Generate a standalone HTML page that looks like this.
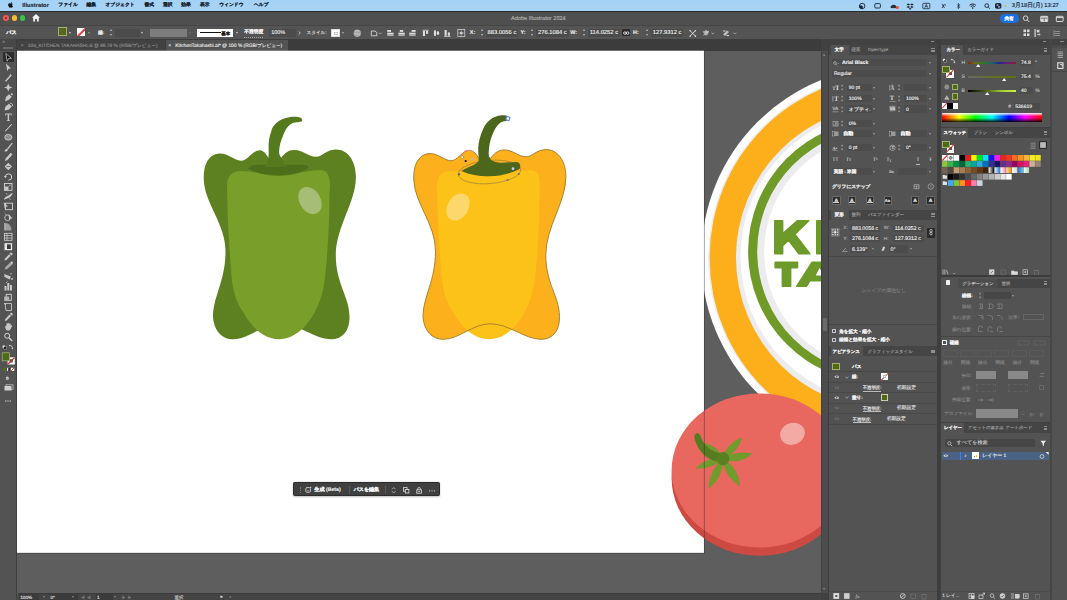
<!DOCTYPE html>
<html lang="ja">
<head>
<meta charset="utf-8">
<title>Adobe Illustrator 2024</title>
<style>
*{box-sizing:border-box;margin:0;padding:0}
html,body{width:1067px;height:600px;overflow:hidden;background:#535353;font-family:"Liberation Sans",sans-serif;}
body{position:relative;color:#ddd;font-size:5px;line-height:1;text-rendering:geometricPrecision}
.a{position:absolute}
.t{position:absolute;white-space:nowrap;line-height:1;font-size:4.8px;color:#d6d6d6;margin-top:.9px;-webkit-text-stroke:.12px}
.j{font-size:4.6px}
.dim{color:#8a8a8a}
.b{font-weight:bold}
/* mac menu bar */
#menubar{left:0;top:0;width:1067px;height:10.5px;background:linear-gradient(#a3d2f7,#a8d3f4)}
#menubar .t{top:3.5px;font-size:4.75px;color:#1a2330;font-weight:bold}
#menubar .l{font-size:5.8px;top:3px}
/* app bars */
#titlebar{left:0;top:10.5px;width:1067px;height:14px;background:#4f4f4f;border-top:1px solid #2a2a2a}
#ctrlbar{left:0;top:24.5px;width:1067px;height:14.5px;background:#545454;border-top:.6px solid #454545}
#tabbar{left:0;top:39px;width:829px;height:11.5px;background:#3c3c3c}
#toolbar{left:0;top:39px;width:16.800px;height:561px;background:#535353;border-right:1px solid #3e3e3e}
#canvas{left:16.800px;top:50.5px;width:805.200px;height:543.5px;background:#5e5e5e;overflow:hidden}
#statusbar{left:17.5px;top:593px;width:811px;height:7px;background:#444}
#dock{left:821px;top:39px;width:246px;height:561px;background:#414141}
.fld{position:absolute;background:#4b4b4b;height:8px;top:3.2px;border-radius:.8px}
.arr{position:absolute;width:0;height:0;border-left:1.6px solid transparent;border-right:1.6px solid transparent;border-top:2px solid #c8c8c8}
.spin{position:absolute;width:3px;height:7px}
.spin:before,.spin:after{content:"";position:absolute;left:0;width:0;height:0;border-left:1.5px solid transparent;border-right:1.5px solid transparent}
.spin:before{top:0;border-bottom:2px solid #bdbdbd}
.spin:after{bottom:0;border-top:2px solid #bdbdbd}
.ic{position:absolute;fill:none;stroke:#d0d0d0;stroke-width:1}
.panel{position:absolute;background:#535353}
.ptabs{position:absolute;left:0;top:0;right:0;height:10.5px;background:#454545}
.ptab{position:absolute;top:0;height:10.5px;background:#535353}
.sw{position:absolute;width:4.55px;height:4.4px}
</style>
</head>
<body>
<!-- MENU BAR -->
<div id="menubar" class="a">
<svg class="a" style="left:8.300px;top:2px" width="5.200" height="6.200" viewBox="0 0 17 20"><path fill="#0d1118" d="M12.2 0c.1 1.1-.3 2.200-1 3-.7.800-1.800 1.400-2.900 1.300-.1-1.100.4-2.200 1-2.900C10 .600 11.200.050 12.200 0zM15.800 6.800c-.2.100-2 1.200-2 3.500 0 2.700 2.400 3.600 2.400 3.600s-1.600 4.800-3.900 4.800c-1 0-1.800-.7-2.900-.7-1.100 0-2.200.7-2.900.7C4.400 18.800.5 13.500.5 9.600c0-3.800 2.400-5.800 4.600-5.800 1.400 0 2.600 1 3.400 1 .8 0 2.200-1.100 3.800-1.100.6 0 2.400.2 3.500 3.100z"/></svg>
<span class="t l" style="left:22.2px">Illustrator</span>
<span class="t" style="left:58.3px">ファイル</span>
<span class="t" style="left:86.6px">編集</span>
<span class="t" style="left:105.5px">オブジェクト</span>
<span class="t" style="left:144.4px">書式</span>
<span class="t" style="left:162.9px">選択</span>
<span class="t" style="left:181.2px">効果</span>
<span class="t" style="left:200px">表示</span>
<span class="t" style="left:219.2px">ウィンドウ</span>
<span class="t" style="left:254px">ヘルプ</span>
<!-- right status icons -->
<svg class="a" style="left:858px;top:1.5px" width="150" height="8" viewBox="0 0 150 8">
<g fill="none" stroke="#1a2330" stroke-width=".9">
<circle cx="4.2" cy="4" r="2.7"/><path d="M4.2 4 L4.2 6.700 A2.700 2.700 0 0 1 1.500 4Z" fill="#1a2330"/>
<rect x="16.800" y="1.600" width="5.600" height="4.400" rx="1"/>
<path d="M33 5.600 C32.500 2.500 38.500 2.500 38.300 5.600Z" fill="#2a2a34"/>
<circle cx="39.300" cy="5.600" r="1.500" fill="#e8503a" stroke="none"/>
<path d="M50.300 1.400 l1.800 1.100 -1.800 1.100 -1.800-1.100z M53.900 1.400 l1.800 1.100 -1.800 1.100 -1.800-1.100z M50.300 3.900 l1.800 1.100 -1.800 1.100 -1.800-1.100z M53.900 3.900 l1.800 1.100 -1.800 1.100 -1.800-1.100z M52.100 5.900 l1.500.9 -1.500.9 -1.500-.9z" fill="#1a2330" stroke="none"/>
<rect x="64.800" y="1.300" width="7" height="5.400" rx=".8" stroke-width=".8"/>
<path d="M66.800 5.700 L68.300 2.300 L69.800 5.700 M67.400 4.600 H69.200" stroke-width=".7"/>
<path d="M84 2 L86.500 6 M86.500 2 L84 6 M86.800 3 h1.200" stroke-width=".8"/>
<path d="M99.300 2.600 L101.700 5.200 L100.400 6.600 V1.400 L101.700 2.800 L99.300 5.400" stroke-width=".7"/>
<path d="M111.500 3.300 A4.600 4.600 0 0 1 117.900 3.300 M112.700 4.600 A2.900 2.900 0 0 1 116.700 4.600" stroke-width="1"/>
<circle cx="114.700" cy="6" r=".8" fill="#1a2330" stroke="none"/>
<circle cx="128.800" cy="3.600" r="1.900"/><path d="M130.200 5 L131.800 6.600"/>
<rect x="137.500" y="1.600" width="5.400" height="4.600" rx=".8" fill="#1a2330"/><rect x="138.600" y="2.500" width="1.800" height="1.200" fill="#bcdef7" stroke="none"/><rect x="140" y="4.300" width="1.800" height="1.200" fill="#bcdef7" stroke="none"/>
<circle cx="147.500" cy="4" r=".9" fill="#e8a33a" stroke="none"/>
</g></svg>
<span class="t l" style="left:1011.800px;font-size:5.800px;font-weight:normal;-webkit-text-stroke:.15px #1a2330">3月18日(月)  13:27</span>
</div>
<!-- TITLE BAR -->
<div id="titlebar" class="a">
<div class="a" style="left:3.2px;top:3.9px;width:5.6px;height:5.6px;border-radius:50%;background:#ee5b54"></div>
<div class="a" style="left:4.9px;top:5.6px;width:2.2px;height:2.2px;border-radius:50%;background:#8c1c15"></div>
<div class="a" style="left:11.6px;top:3.9px;width:5.6px;height:5.600px;border-radius:50%;background:#f5bd2f"></div>
<div class="a" style="left:19.900px;top:3.900px;width:5.600px;height:5.600px;border-radius:50%;background:#34c648"></div>
<svg class="a" style="left:31.500px;top:2.800px" width="8" height="7.500" viewBox="0 0 16 15"><path fill="#f0f0f0" d="M8 0 L16 7.500 H13.600 V15 H9.800 V9.800 H6.200 V15 H2.400 V7.500 H0Z"/></svg>
<span class="t" style="left:511px;top:4.200px;font-size:5.600px;color:#b4b4b4">Adobe Illustrator 2024</span>
<div class="a" style="left:999.500px;top:2.600px;width:19.300px;height:8.600px;border-radius:4.300px;background:#1b6fe0"></div>
<span class="t b" style="left:1004.400px;top:4.400px;color:#fff;font-size:4.700px">共有</span>
<svg class="a" style="left:1021px;top:2.300px" width="46" height="10" viewBox="0 0 46 10"><g fill="none" stroke="#d8d8d8" stroke-width="1">
<circle cx="4.600" cy="4.200" r="2.300"/><path d="M6.300 5.900 L8.300 8"/>
<rect x="19.700" y="2.300" width="7" height="5.200" rx=".6" fill="#d8d8d8"/><path d="M19.700 4.200 H26.700 M23.200 4.200 V7.500" stroke="#4f4f4f" stroke-width=".7"/>
<rect x="35.300" y="2.300" width="6.800" height="5.200" rx=".6"/><path d="M35.300 3.600 H42.100"/>
</g></svg>
</div>
<!-- CONTROL BAR -->
<div id="ctrlbar" class="a">
<span class="t j b" style="left:6.3px;top:4.800px;color:#f2f2f2;font-size:5px">パス</span>
<div class="a" style="left:58.200px;top:1.900px;width:8.800px;height:9px;background:#55681b;border:1.100px solid #a3ae6e"></div>
<div class="arr" style="left:69px;top:6.300px"></div>
<div class="a" style="left:76.800px;top:2.900px;width:8.600px;height:8px;background:#fff;overflow:hidden"><div class="a" style="left:-2px;top:3.300px;width:12px;height:1.500px;background:#e23b3b;transform:rotate(-45deg)"></div></div>
<div class="arr" style="left:87.600px;top:6.300px;border-top-color:#9a9a9a"></div>
<span class="t j b" style="left:98.200px;top:5px;color:#eee">線:</span>
<div class="spin" style="left:110.300px;top:3.800px"></div>
<div class="fld" style="left:115px;width:24.500px"></div>
<div class="arr" style="left:141.200px;top:6.300px"></div>
<div class="a" style="left:149.500px;top:3px;width:37.500px;height:8.500px;background:#7d7d7d"></div>
<div class="arr" style="left:189.200px;top:6.300px;border-top-color:#6e6e6e"></div>
<div class="a" style="left:197.200px;top:3px;width:36px;height:8.500px;background:#fff"></div>
<div class="a" style="left:200px;top:6.600px;width:20.500px;height:1.300px;background:#111"></div>
<span class="t j b" style="left:221.200px;top:5.200px;color:#111;font-size:4.500px">基本</span>
<div class="arr" style="left:235.500px;top:6.300px"></div>
<span class="t j b" style="left:244.200px;top:5px;color:#f0f0f0;border-bottom:.5px dotted #aaa;padding-bottom:.4px;font-size:4.800px">不透明度</span>
<div class="fld" style="left:268.500px;width:27.500px"></div>
<span class="t" style="left:271.200px;top:4.800px;color:#f0f0f0;font-size:5.500px">100%</span>
<svg class="ic" style="left:298px;top:5.200px" width="3" height="4"><path d="M.6.400 L2.300 2 L.6 3.600" stroke-width=".8"/></svg>
<span class="t j" style="left:306.500px;top:5px;color:#e0e0e0">スタイル:</span>
<div class="a" style="left:331px;top:3.400px;width:8.700px;height:8px;background:#fff;border:.6px solid #ddd"><div class="a" style="left:1.800px;top:1.800px;width:4.200px;height:3.600px;border:.6px solid #c9c9c9"></div></div>
<div class="arr" style="left:342px;top:6.300px;border-top-color:#aaa"></div>
<svg class="a" style="left:352px;top:2.500px" width="30" height="10" viewBox="0 0 30 10"><circle cx="5.300" cy="5.200" r="3.700" fill="#a4a4a4"/><path d="M3 3 C4.500 2 6 3.500 7.500 3 M2.500 6 C4 5 6 7 8 6" stroke="#cfcfcf" stroke-width=".9" fill="none"/><path d="M19.300 3 H23 L24.800 4.600 V7.800 H19.300Z" fill="none" stroke="#d5d5d5" stroke-width=".9"/><path d="M27 4.600 l1.300 1.500 1.300-1.500" stroke="#bbb" stroke-width=".7" fill="none"/></svg>
<!-- align icons -->
<svg class="a" style="left:386px;top:2.500px" width="82" height="10" viewBox="0 0 82 10"><g fill="#dcdcdc">
<rect x="1.200" y="2" width="3.800" height="1.900"/><rect x="1.200" y="4.700" width="6.400" height="1.900"/><rect x="1.200" y="7.200" width="6.400" height=".7"/>
<rect x="13.800" y="2" width="3.400" height="1.900"/><rect x="12.400" y="4.700" width="6.400" height="1.900"/><rect x="12.400" y="7.200" width="6.400" height=".7"/>
<rect x="25.600" y="2" width="4" height="1.900"/><rect x="23.200" y="4.700" width="6.400" height="1.900"/><rect x="23.200" y="7.200" width="6.400" height=".7"/>
<rect x="36.400" y="1.800" width="6.200" height=".8"/><rect x="36.900" y="3" width="2.100" height="5"/><rect x="40" y="3" width="2.100" height="2.800"/>
<rect x="48" y="2.400" width="2" height="5.400"/><rect x="51" y="3.400" width="2" height="3.400"/><rect x="47.500" y="4.800" width="6" height=".6"/>
<rect x="58.600" y="2" width="2.100" height="5.800"/><rect x="61.800" y="4.400" width="2.100" height="3.400"/><rect x="58" y="8" width="6.600" height=".7"/>
</g><g fill="none" stroke="#dcdcdc" stroke-width=".7"><rect x="71.800" y="1.600" width="7" height="7"/><path d="M71.800 5.100 H78.800 M75.300 1.600 V8.600" stroke-dasharray=".9 .8"/><rect x="74.500" y="4.300" width="1.600" height="1.600" fill="#dcdcdc"/></g></svg>
<span class="t b" style="left:469.800px;top:4.800px;color:#ececec;font-size:5.400px">X:</span>
<div class="spin" style="left:480.500px;top:3.800px"></div>
<div class="fld" style="left:485.500px;width:32.500px"></div>
<span class="t" style="left:487.600px;top:4.700px;color:#f0f0f0;font-size:5.800px">883.0056 c</span>
<span class="t b" style="left:520.500px;top:4.800px;color:#ececec;font-size:5.400px">Y:</span>
<div class="spin" style="left:531px;top:3.800px"></div>
<div class="fld" style="left:536px;width:33px"></div>
<span class="t" style="left:538px;top:4.700px;color:#f0f0f0;font-size:5.800px">276.1084 c</span>
<span class="t b" style="left:570.300px;top:4.800px;color:#ececec;font-size:5.400px">W:</span>
<div class="spin" style="left:583.200px;top:3.800px"></div>
<div class="fld" style="left:588px;width:32px"></div>
<span class="t" style="left:589.800px;top:4.700px;color:#f0f0f0;font-size:5.800px">114.0252 c</span>
<div class="a" style="left:622.300px;top:3.300px;width:8.200px;height:7.600px;background:#2a2a2a;border-radius:1px"></div>
<svg class="ic" style="left:623.300px;top:5px" width="6.500" height="4.500" viewBox="0 0 6.500 4.500"><rect x=".6" y=".9" width="2.600" height="2.400" rx="1.100" stroke="#f0f0f0" stroke-width=".9"/><rect x="3.300" y=".9" width="2.600" height="2.400" rx="1.100" stroke="#f0f0f0" stroke-width=".9"/></svg>
<span class="t b" style="left:633px;top:4.800px;color:#ececec;font-size:5.400px">H:</span>
<div class="spin" style="left:645.500px;top:3.800px"></div>
<div class="fld" style="left:650.500px;width:32.500px"></div>
<span class="t" style="left:652.800px;top:4.700px;color:#f0f0f0;font-size:5.800px">127.9312 c</span>
<svg class="a" style="left:687px;top:2.500px" width="52" height="10" viewBox="0 0 52 10"><g fill="none" stroke="#d8d8d8" stroke-width="1"><path d="M3 2.600 L8.600 8.200 M8.600 2.600 L3 8.200"/><path d="M2.600 2.600 h1.200 M7.800 2.600 h1.200 M2.600 8.200 h1.200 M7.800 8.200 h1.200" stroke-width="1.400"/>
<path d="M16 4 H22 M19 2 V7.500 M16.500 7 L21.500 3" /><rect x="17.500" y="3" width="3.500" height="3.500" fill="#bdbdbd" stroke="none"/><path d="M24.500 4.600 l1.300 1.500 1.300-1.500" stroke="#bbb" stroke-width=".7"/>
<path d="M36 6.500 L40 2.500 L42 4 L38 8Z" fill="#bdbdbd" stroke="none"/><path d="M36 3 h2.500 M39.500 7.500 h2.500"/><path d="M46.500 4.600 l1.300 1.500 1.300-1.500" stroke="#bbb" stroke-width=".7"/>
</g></svg>
<svg class="a" style="left:1020px;top:2.500px" width="46" height="10" viewBox="0 0 46 10"><g fill="#d8d8d8"><rect x="3.500" y="1.500" width="2.500" height="2.600"/><rect x="7" y="1.500" width="2.500" height="2.600"/><rect x="3.500" y="5.400" width="2.500" height="2.600"/><rect x="7" y="5.400" width="2.500" height="2.600"/>
<rect x="14.500" y="1" width="1.200" height="8"/><rect x="16.800" y="1.800" width="2.600" height="2.600"/><path d="M17 6.500 h3 l-1-1.200 M20 6.500 l-1 1.200" stroke="#d8d8d8" stroke-width=".8" fill="none"/></g>
<g fill="#8e8e8e"><rect x="35" y="3" width="5" height="1"/><rect x="35" y="5" width="5" height="1"/><rect x="35" y="7" width="5" height="1"/><rect x="33.500" y="2" width="1" height="6.500"/></g></svg>
</div>
<!-- TAB BAR -->
<div id="tabbar" class="a">
<div class="a" style="left:16.800px;top:.5px;width:148.200px;height:11px;background:#424242"></div>
<div class="a" style="left:165.500px;top:.5px;width:122.500px;height:11px;background:#535353"></div>
<span class="t" style="left:20.800px;top:4.200px;color:#8f8f8f;font-size:5px">×</span>
<span class="t" style="left:27.800px;top:3.700px;color:#919191;font-size:4.800px">10a_KITCHEN TAKAHASHI.ai @ 66.76 % (RGB/<span class="j">プレビュー</span>)</span>
<span class="t" style="left:168.200px;top:4.200px;color:#e8e8e8;font-size:5px">×</span>
<span class="t" style="left:175.300px;top:3.700px;color:#ececec;font-size:4.900px">KitchenTakahashi.ai* @ 100 % (RGB/<span class="j">プレビュー</span>)</span>
</div>
<!-- CANVAS -->
<div id="canvas" class="a"></div>
<svg class="a" style="left:0;top:0" width="1067" height="600" viewBox="0 0 1067 600">
<defs>
<clipPath id="cv"><rect x="16.800" y="50.5" width="805" height="543.5"/></clipPath>
<g id="pepbody">
<path d="M268.5,158 C265,152 262,150 258.7,150.4 C252,151 247,161 241,160.8 C234,160.5 228,153 219,153.6 C208,154.5 203,166 203.8,180 C204.5,203 225.5,224 225.5,251 C225.5,281 213.300,296 213,316.4 C213.5,330 222,339.500 233.5,339.300 C250,339 262,323.800 280.500,323.800 C299,323.800 314,339 331,339.300 C343,339.500 350,330 349.5,316.4 C349.200,296 335.8,284 335.8,255 C335.8,227 356,202 355.9,176.7 C355.8,160 347,149 335.2,149.6 C326,150 322,157 316.1,156.8 C308,156.5 302,149.5 293.8,149.9 C287,150.3 284,154 281,158 Z"/>
</g>
<path id="pepinner" d="M239.6,171 C232,172 227,176 227,186 L227.3,195 C227.5,225 230,255 231.2,272.5 C233,295 238,305 242.8,311.3 C250,325 262,339 279,339.2 C296,339 308,325 315.2,311.3 C321,300 324,290 325.5,272.5 C328,250 329.4,220 329.4,195 L330,186 C330,176 327,171 322.5,170.3 C305,169 295,176 278,176 C262,176 252,170 239.6,171 Z"/>
</defs>
<g clip-path="url(#cv)">
<!-- artboard -->
<rect x="16.800" y="50.5" width="687.200" height="502.5" fill="#fff"/>
<!-- plate -->
<circle cx="892.5" cy="257.6" r="191.3" fill="#fff"/>
<circle cx="893.6" cy="258" r="185.5" fill="#ededf0"/>
<circle cx="893.6" cy="258" r="184" fill="#fcaf1b"/>
<circle cx="888" cy="257.4" r="152" fill="#ececef"/>
<circle cx="887" cy="256.5" r="146.5" fill="#fff"/>
<circle cx="879.3" cy="251.3" r="131.2" fill="#6f9a27"/>
<circle cx="880.1" cy="251.6" r="122.9" fill="#ececef"/>
<circle cx="881.5" cy="252" r="117.3" fill="#fff"/>
<!-- KI / TA -->
<g fill="#6d9a28" stroke="#6d9a28" stroke-width="1.600" stroke-linejoin="round">
<path d="M774.800,220.800 H782.600 V233.800 L797.300,220.800 H808.700 L794.800,234.300 L809.800,253.700 H799 L788.600,240.200 L782.600,245.700 V253.700 H774.800Z"/>
<path d="M816.800,220.800 H826 V253.700 H816.800Z"/>
<path d="M775.200,262.400 H797.500 V267.600 H790.600 V286.300 H782.400 V267.600 H775.200Z"/>
<path d="M796.800,286.300 L812,262.400 H826 V286.300Z"/>
</g>
<path d="M806.800,287.200 L810.300,281.600 H826 V287.200Z M819.600,268 L815.700,275.600 H823.600Z" fill="#fff"/>
<!-- tomato -->
<ellipse cx="759.8" cy="478.2" rx="88.2" ry="77.6" fill="#cc4a42"/>
<ellipse cx="759.6" cy="470.5" rx="88" ry="77" fill="#e8675f"/>
<ellipse cx="792.5" cy="433.8" rx="12.6" ry="10.8" fill="#f3a9a4" transform="rotate(-22 792.5 433.8)"/>
<g fill="#6f9c2c" stroke="#6f9c2c" stroke-width="1" stroke-linejoin="round">
<path d="M723,458.700 Q737.500,453 741.500,438 Q727,443.500 723,458.700Z"/>
<path d="M723,458.700 Q739,465 751.500,453.800 Q737,451 723,458.700Z"/>
<path d="M723,458.700 Q724.500,476 739.500,485.500 Q738,468 723,458.700Z"/>
<path d="M723,458.700 Q710,470 709,488 Q722.500,477 723,458.700Z"/>
<path d="M723,458.700 Q707,457.500 696.500,468 Q711,469 723,458.700Z"/>
<path d="M723,458.700 Q717,446 704.500,443.500 Q709,455 723,458.700Z"/>
</g>
<path d="M724,462.500 C712,462 699.500,456 694.500,438.500 C693.500,433 699,431.500 700.500,436 C703.500,446 712,452.500 724,454Z" fill="#567c20"/>
<ellipse cx="723" cy="458.700" rx="6.300" ry="6.600" fill="#5a8022"/>
<!-- artboard edge -->
<path d="M704.400,50.5 V553.2 H16.800" fill="none" stroke="#2a2a2a" stroke-opacity=".6" stroke-width=".7"/>
<!-- green pepper -->
<use href="#pepbody" fill="#5d8120"/>
<use href="#pepinner" fill="#7a9e2a"/>
<path d="M248.4,168.7 C251,165.5 253,164.8 256,164.8 L303,164.8 C306,164.8 308,166 308.9,167.9 C300,173 290,175.1 277.9,175.1 C266,175.1 256,173 248.4,168.7 Z" fill="#4d6f1b"/>
<path d="M302.1,120.9 C303,119 301,117.5 298,117 C293,116.5 289,117 284.2,118.5 C277,121 272.5,126 271.5,130.5 C269,138 268.6,142 268.6,146.4 C268.6,151 269,155 268,160 L265,167 L286,167 L281,157.6 C279.5,155 279,153 279.1,151.2 C279.5,145 281,140 282.6,136.9 C285,130 288,125.5 292.2,123.3 C296,121.5 300,122.5 302.1,120.9 Z" fill="#557a1e"/>
<ellipse cx="310" cy="200.5" rx="10.5" ry="14.5" fill="#a5bd75" transform="rotate(-32 310 200.5)"/>
<!-- yellow pepper -->
<g transform="translate(210,0)">
<use href="#pepbody" fill="#fbb01c"/>
<use href="#pepinner" fill="#fdc218"/>
<use href="#pepbody" fill="none" stroke="#a07f2e" stroke-width=".95"/>
<ellipse cx="248" cy="207" rx="10.5" ry="14.5" fill="#fdd66c" transform="rotate(32 248 207)"/>
<ellipse cx="279.5" cy="172" rx="31.3" ry="11.6" fill="none" stroke="#8a7a46" stroke-width=".6" transform="rotate(-4.700 279.5 172)"/>
<path d="M299.4,118.5 C299,115.5 295,115 290,115.5 C283,116.5 277,121 273.5,128 C270,136 268.5,142 268.2,148 C268,153 269,157 268.5,161 C266,165.5 258,166.5 251.5,171 C260,175 270,176.5 279,176.3 C290,176 301,173.5 309.5,169 C311.500,165 309.500,162 306,162 C299,162 290,164 284,161.500 C280,160 278.5,157 278.7,152.8 C279,146 280,141 281.5,137 C284,130 287,125 290.6,122.5 C294,120.5 298,121.5 299.4,118.5Z" fill="#4c661c"/>
<rect x="296.200" y="116.800" width="3.400" height="3.400" fill="#fff" stroke="#5a7fe0" stroke-width="1" transform="rotate(18 297.900 118.500)"/>
<circle cx="255.700" cy="161" r="1.100" fill="#111"/>
<circle cx="252.300" cy="157" r="1.400" fill="#fff" stroke="#8a6a3a" stroke-width=".5"/>
<circle cx="262.400" cy="159.300" r="1.500" fill="#c8b7b0"/>
<circle cx="303" cy="168.700" r="1.400" fill="#c4d2f0"/>
<circle cx="249" cy="174.300" r="1.200" fill="#6d6a8a"/>
<circle cx="297.600" cy="180" r="1.100" fill="#8a6a7a"/>
<circle cx="308.700" cy="174" r="1.100" fill="#7a6a8a"/>
<path d="M254,151.500 C257,149.800 260,150 262.500,151.500" fill="none" stroke="#e39aa6" stroke-width="1.100"/>
<path d="M251,153.500 l2.500 4" stroke="#8a7a55" stroke-width=".5"/>
</g>
</g>
</svg><!-- contextual task bar -->
<div class="a" style="left:292.700px;top:481.500px;width:147px;height:14.900px;background:#404040;border:.7px solid #2c2c2c;border-radius:1.500px;box-shadow:0 .5px 2px rgba(0,0,0,.25)">
<div class="a" style="left:6.800px;top:4px;width:.6px;height:6px;border-left:.6px dotted #777"></div>
<svg class="a" style="left:11.800px;top:3.800px" width="7" height="7" viewBox="0 0 7 7"><rect x=".8" y="1.600" width="4.600" height="4.600" rx="1" fill="none" stroke="#e8e8e8" stroke-width=".8"/><path d="M2.200 4.200 c.5.8 1.400.8 1.900 0" stroke="#e8e8e8" stroke-width=".6" fill="none"/><path d="M5.700 .2 l.35.85 .85.35 -.85.35 -.35.85 -.35-.85 -.85-.35 .85-.35z" fill="#fff" stroke="#404040" stroke-width=".3"/></svg>
<span class="t j b" style="left:20.500px;top:4.900px;color:#f4f4f4;font-size:5.200px">生成 (Beta)</span>
<div class="a" style="left:55px;top:3.500px;width:.5px;height:7.500px;background:#5a5a5a"></div>
<span class="t j b" style="left:60px;top:5px;color:#f4f4f4;font-size:5px">パスを編集</span>
<div class="a" style="left:91px;top:3.500px;width:.5px;height:7.500px;background:#5a5a5a"></div>
<svg class="a" style="left:95px;top:3px" width="48" height="8.500" viewBox="0 0 48 8.500"><g fill="none" stroke="#e2e2e2" stroke-width=".8"><path d="M3 3.300 L4.700 1.500 L6.400 3.300 M3 5.200 L4.700 7 L6.400 5.200" stroke="#bdbdbd"/><rect x="14.500" y="1.600" width="3.600" height="3.600"/><rect x="16.300" y="3.400" width="3.600" height="3.600" fill="#404040"/><rect x="27.800" y="3.800" width="4.600" height="3.400"/><path d="M28.800 3.800 V2.800 A1.300 1.300 0 0 1 31.400 2.800 V3.800"/><path d="M29.200 5.500 h1.800" /></g><g fill="#e2e2e2"><circle cx="40.600" cy="4.800" r=".6"/><circle cx="43" cy="4.800" r=".6"/><circle cx="45.400" cy="4.800" r=".6"/></g></svg>
</div>
<!-- STATUS BAR -->
<div id="statusbar" class="a">
<div class="a" style="left:0;top:0;width:803.5px;height:.6px;background:#3a3a3a"></div>
<div class="a" style="left:1.200px;top:.8px;width:20.500px;height:6.200px;background:#3b3b3b"></div><div class="a" style="left:32.600px;top:.8px;width:28px;height:6.200px;background:#3b3b3b"></div><div class="a" style="left:78.800px;top:.8px;width:17px;height:6.200px;background:#3b3b3b"></div>
<span class="t" style="left:2.800px;top:1.9px;font-size:4.600px;color:#e0e0e0">100%</span>
<div class="arr" style="left:25px;top:3.2px;border-top-color:#bbb;transform:scale(.8)"></div>
<span class="t" style="left:33px;top:1.9px;font-size:4.600px;color:#e0e0e0">0°</span>
<div class="arr" style="left:54.500px;top:3.2px;border-top-color:#bbb;transform:scale(.8)"></div>
<span class="t" style="left:63px;top:1.8px;font-size:4.500px;color:#777;letter-spacing:1.500px">◀◀</span>
<span class="t" style="left:79.500px;top:1.9px;font-size:4.600px;color:#e0e0e0">1</span>
<div class="arr" style="left:96px;top:3.2px;border-top-color:#bbb;transform:scale(.8)"></div>
<span class="t" style="left:104px;top:1.8px;font-size:4.500px;color:#777;letter-spacing:1.500px">▶▶</span>
<span class="t j" style="left:157px;top:1.8px;font-size:4.400px;color:#d0d0d0">選択</span>
<span class="t" style="left:203px;top:1.6px;font-size:4.500px;color:#e0e0e0">▸</span>
<span class="t" style="left:212px;top:1.6px;font-size:4.500px;color:#aaa">‹</span>
</div>
<!-- TOOLBAR -->
<div id="toolbar" class="a">
<div class="a" style="left:0;top:0;width:15.800px;height:11.500px;background:#474747"></div>
<span class="t" style="left:2.300px;top:.2px;font-size:5px;color:#9a9a9a;letter-spacing:-.8px">››</span>
<div class="a" style="left:3px;top:7.500px;width:10px;height:1.500px;border-top:.5px solid #6a6a6a;border-bottom:.5px solid #6a6a6a"></div>
<div class="a" style="left:2.600px;top:13.300px;width:11.600px;height:9.400px;background:#2d2d2d;border-radius:1px"></div>
<svg class="a" style="left:0;top:0" width="17" height="380" viewBox="0 39 17 380">
<g fill="#c8c8c8" stroke="none">
<!-- 1 selection (y57) -->
<path d="M5.800 53.500 L11.300 58.300 L8.500 58.500 L7.200 61.200Z" fill="#111" stroke="#cfcfcf" stroke-width=".7"/>
<!-- 2 direct select (67.5) -->
<path d="M6 63.500 L11 68.600 L8.600 68.700 L7.300 71.200Z"/>
<!-- 3 wand (77.5) -->
<path d="M5 80.800 L9.800 75.500 L10.800 76.400 L6 81.700Z"/><path d="M10.500 73.600 l.5 1.300 1.300.4 -1.300.5 -.5 1.300 -.5-1.300 -1.300-.5 1.300-.4z"/>
<!-- 4 pen/curv (87.5) -->
<path d="M8.200 83.500 L9.600 86.400 L12.500 87.400 L9.600 88.600 L8.200 91.500 L7 88.600 L4 87.400 L7 86.400Z"/>
<!-- 5 pen (97.5) -->
<path d="M5 101.200 L6 97 L9 94.200 L11.800 96.800 L9 99.800Z"/><circle cx="11.800" cy="94.300" r="1"/>
<!-- 6 curvature pen (107.5) -->
<path d="M4.500 110.500 L5.500 106.500 L9 103.800 L11.800 106.500 L8.600 109.800Z"/><path d="M10 103.200 C12 103.200 13 104.500 12.500 106" stroke="#d4d4d4" stroke-width=".8" fill="none"/>
<!-- 7 type (117) -->
<path d="M5.200 113.500 H11.600 V115.400 H10.900 V114.600 H9.100 V120.200 H10 V121 H6.800 V120.200 H7.700 V114.600 H5.900 V115.400 H5.200Z"/>
<!-- 8 line (127) -->
<path d="M5 130.800 L11.500 123.800 L12.100 124.400 L5.600 131.400Z"/>
<!-- 9 ellipse (137) -->
<ellipse cx="8.300" cy="137.300" rx="3.600" ry="2.900" fill="#8f8f8f" stroke="#d4d4d4" stroke-width=".8"/>
<!-- 10 brush (147) -->
<path d="M7 148.500 L11.800 142.800 L12.700 143.600 L8 149.400Z"/><path d="M4.500 151.500 C5 149.500 6 148.600 7 148.800 L7.900 149.700 C8 151 6.500 151.700 4.500 151.500Z"/>
<!-- 11 pencil (157) -->
<path d="M5 161 L5.600 158.600 L10.800 152.800 L12.500 154.400 L7.300 160.200Z"/>
<!-- 12 eraser (167) -->
<path d="M8.300 162.800 L12 166.500 L8.300 170.200 L4.600 166.500Z"/><path d="M6.500 166.500 h3.600" stroke="#535353" stroke-width=".8"/>
<!-- 13 rotate (177) -->
<path d="M5.300 177 A3.200 3.200 0 1 1 8.500 180.200" fill="none" stroke="#d4d4d4" stroke-width="1"/><path d="M3.800 176 L5.300 178.200 L6.900 176Z"/>
<!-- 14 scale (187) -->
<rect x="4.500" y="183.500" width="7.500" height="6.800" fill="none" stroke="#d4d4d4" stroke-width=".9"/><rect x="4.500" y="186.500" width="4" height="3.800"/><path d="M8.500 186.500 L11 184.500" stroke="#d4d4d4" stroke-width=".7"/>
<!-- 15 width (196.500) -->
<path d="M4 199 C6 196 7 196.500 8.500 195.500 C10 194.500 11 193 12.500 193.200 L12.500 194.200 C11 196 10 197.500 8.500 198 C7 198.500 6 199 4 199.800Z"/><path d="M6 193 l1.200 1.600 M10.500 199.800 l-1-1.400" stroke="#d4d4d4" stroke-width=".7"/>
<!-- 16 free transform (206.500) -->
<rect x="5.500" y="203.200" width="7" height="6.500" fill="none" stroke="#d4d4d4" stroke-width=".9"/><path d="M3.500 202 L8 206.500 L5.800 206.700 L4.800 208.800Z"/>
<!-- 17 shape builder (217) -->
<circle cx="7.500" cy="217.800" r="2.800" fill="none" stroke="#d4d4d4" stroke-width=".8"/><path d="M8.500 214 L12.500 218.500 L10.300 218.600 L9.300 220.700Z"/><path d="M5 213.500 l1.500 1.500" stroke="#d4d4d4" stroke-width=".7"/>
<!-- 18 gradient-ish (227) -->
<path d="M4.800 223 C9 223 11.500 226 11.500 230.500 H4.800Z" fill="#9d9d9d"/><path d="M4.800 223 V230.500" stroke="#d4d4d4" stroke-width=".8"/>
<!-- 19 mesh (237) -->
<rect x="4.500" y="233.300" width="7.500" height="7" fill="none" stroke="#d4d4d4" stroke-width=".8"/><path d="M7 233.300 V240.300 M4.500 235.500 H12 M4.500 238 H12" stroke="#d4d4d4" stroke-width=".7" fill="none"/>
<!-- 20 gradient (247) -->
<rect x="4.500" y="243.200" width="7.600" height="7" fill="#e8e8e8"/><rect x="7" y="244.400" width="3.800" height="4.600" fill="#3a3a3a"/>
<!-- 21 eyedropper (257) -->
<path d="M4.500 260.500 L5 258.500 L9.200 254.300 L10.700 255.800 L6.500 260Z"/><path d="M9.500 253.500 L11 252.200 L12.800 254 L11.500 255.500Z"/>
<!-- 22 blend (266) -->
<path d="M4.500 269.500 L5.500 267 L10.500 262.300 L12.500 264.300 L7.300 269Z" fill="#a9a9a9"/><circle cx="11.800" cy="262.800" r="1.200"/>
<!-- 23 symbol sprayer (276) -->
<path d="M4.200 274 L10.800 276.500 L9.800 279.500 L4.500 277Z"/><circle cx="12" cy="279" r=".9"/><circle cx="11" cy="273.800" r=".7"/>
<!-- 24 graph (286.500) -->
<rect x="4.500" y="286" width="2" height="4.500"/><rect x="7.300" y="283" width="2" height="7.500"/><rect x="10" y="285" width="2" height="5.500"/><path d="M6 283 l1.500-1.500" stroke="#d4d4d4" stroke-width=".7"/>
<!-- 25 artboard (297) -->
<rect x="6.300" y="294.300" width="5" height="6" fill="none" stroke="#d4d4d4" stroke-width=".9"/><rect x="4.200" y="296.500" width="5" height="4.500" fill="#b3b3b3"/>
<!-- 26 slice (307) -->
<path d="M5 303.500 H11.500 V310.500 M5 303.500 L6 310.500 H11.500" fill="none" stroke="#d4d4d4" stroke-width=".8"/><path d="M4 303 l2 2" stroke="#d4d4d4" stroke-width=".8"/>
<!-- 27 eyedrop/measure (317) -->
<path d="M4.800 321 L5.300 319 L9.500 314.500 L11 316 L6.800 320.500Z"/><path d="M9.800 313.800 L11.300 312.500 L13 314.200 L11.700 315.700Z"/>
<!-- 28 hand (327) -->
<path d="M5 327 L6.500 325 V323.500 H7.500 V323 H8.500 V323.200 H9.500 V323.700 H10.700 V326 L11.700 325 L12.300 325.800 L10.500 329 C10 331 6.500 331 6 329.500Z"/>
<!-- 29 zoom (337) -->
<circle cx="7.200" cy="335.800" r="2.500" fill="none" stroke="#d4d4d4" stroke-width="1"/><path d="M9 337.800 L12.200 341" stroke="#d4d4d4" stroke-width="1.300"/>
<!-- swap icons (347) -->
<rect x="2.600" y="345.500" width="2.400" height="2.400" fill="#e8e8e8"/><rect x="3.800" y="346.700" width="2.400" height="2.400" fill="#111" stroke="#d4d4d4" stroke-width=".4"/>
<path d="M9.500 345.500 C11.500 345.300 12.500 346.500 12.400 348.500" fill="none" stroke="#d4d4d4" stroke-width=".8"/><path d="M8.600 345.500 l1.500-1 v2z M12.400 349.500 l-1-1.500 h2z"/>
</g>
<!-- fill / stroke -->
<rect x="7.600" y="357.300" width="7.200" height="7.200" fill="#fff"/><path d="M8 364 L14.400 357.700" stroke="#e02f2f" stroke-width="1.300"/><rect x="9.600" y="359.300" width="3.200" height="3.200" fill="#535353"/><path d="M10 362 L12.400 359.600" stroke="#e02f2f" stroke-width="1"/>
<rect x="2.200" y="352.800" width="7.200" height="8" fill="#4f6a17" stroke="#a5b06f" stroke-width=".8"/>
<!-- mode icons (369.500) -->
<rect x="2.800" y="367.800" width="3.200" height="3.200" fill="#4f6a17"/>
<rect x="7" y="367.800" width="3.200" height="3.200" fill="#e6e6e6"/><rect x="8.200" y="367.800" width="2" height="3.200" fill="#333"/>
<rect x="11" y="367.800" width="3.200" height="3.200" fill="#fff"/><path d="M11.200 370.800 L14 368" stroke="#e02f2f" stroke-width=".9"/>
<!-- draw mode (378) -->
<circle cx="7.300" cy="378" r="1.500" fill="#d0d0d0"/><rect x="6" y="378.300" width="2.600" height="1.800" fill="#a8a8a8"/>
<!-- screen mode (387.500) -->
<rect x="4.500" y="386" width="7" height="4.500" fill="#cfcfcf"/><rect x="6" y="384.800" width="7" height="4.500" fill="none" stroke="#cfcfcf" stroke-width=".7"/>
<!-- ... (401) -->
<circle cx="5.800" cy="401" r=".65" fill="#cfcfcf"/><circle cx="8" cy="401" r=".65" fill="#cfcfcf"/><circle cx="10.200" cy="401" r=".65" fill="#cfcfcf"/>
</svg>
</div>
<!-- DOCK -->
<div id="dock" class="a"></div>
<div class="a" style="left:821.7px;top:50.5px;width:6.3px;height:542.5px;background:#4c4c4c;"></div>
<div class="a" style="left:822.7px;top:318px;width:4.3px;height:13px;background:#6a6a6a;border-radius:1px"></div>
<span class="t " style="left:823px;top:52.3px;font-size:4px;color:#8a8a8a">▴</span>
<span class="t " style="left:823px;top:586.5px;font-size:4px;color:#8a8a8a">▾</span>
<div class="a" style="left:828px;top:39px;width:1.4px;height:561px;background:#3d3d3d;"></div>
<div class="a" style="left:829.4px;top:39px;width:108px;height:5.8px;background:#424242;"></div>
<div class="a" style="left:940.6px;top:39px;width:109px;height:5.8px;background:#424242;"></div>
<div class="a" style="left:1051.7px;top:39px;width:15.3px;height:5.8px;background:#424242;"></div>
<div class="a" style="left:937.4px;top:39px;width:3.2px;height:561px;background:#3e3e3e;"></div>
<div class="a" style="left:1049.6px;top:39px;width:2.1px;height:561px;background:#464646;"></div>
<div class="a" style="left:930.5px;top:41.2px;width:3.4px;height:0.8px;background:#8c8c8c;"></div>
<div class="a" style="left:1042.8px;top:41.2px;width:3.4px;height:0.8px;background:#8c8c8c;"></div>
<div class="a" style="left:1060.3px;top:41.2px;width:3.4px;height:0.8px;background:#8c8c8c;"></div>
<div class="a" style="left:829.4px;top:44.8px;width:108px;height:165px;background:#535353;"></div>
<div class="a" style="left:829.4px;top:44.8px;width:108px;height:10px;background:#454545;"></div>
<div class="a" style="left:830.5px;top:44.8px;width:18.5px;height:10px;background:#535353;"></div>
<span class="t j b" style="left:834.7px;top:47.599999999999994px;color:#f0f0f0;font-size:4.450px">文字</span>
<span class="t j" style="left:851.5px;top:47.599999999999994px;color:#a2a2a2;font-size:4.400px">段落</span>
<span class="t j" style="left:868px;top:47.599999999999994px;color:#a2a2a2;font-size:4.400px">OpenType</span>
<div class="a" style="left:931.4px;top:48.3px;width:3.2px;height:0.55px;background:#8e8e8e;"></div>
<div class="a" style="left:931.4px;top:49.599999999999994px;width:3.2px;height:0.55px;background:#8e8e8e;"></div>
<div class="a" style="left:931.4px;top:50.9px;width:3.2px;height:0.55px;background:#8e8e8e;"></div>
<div class="a" style="left:832px;top:59px;width:95px;height:7.4px;background:#4c4c4c;border-radius:.8px"></div>
<svg class="a" style="left:833.2px;top:60.6px" width="6" height="5" viewBox="0 0 6 5"><circle cx="2" cy="2" r="1.4" fill="none" stroke="#bdbdbd" stroke-width=".7"/><path d="M3 3 L4.300 4.400 M4.500 1.800 l.8.8 .8-.8" stroke="#bdbdbd" stroke-width=".6" fill="none"/></svg>
<span class="t " style="left:841.9px;top:60.4px;font-size:5.1px;color:#f2f2f2;font-weight:bold">Arial Black</span>
<div class="arr" style="left:928.6px;top:62px;border-top-color:#c4c4c4;transform:scale(.85)"></div>
<div class="a" style="left:832px;top:69.8px;width:95px;height:7.4px;background:#4c4c4c;border-radius:.8px"></div>
<span class="t " style="left:833.9px;top:71.2px;font-size:5.1px;color:#f2f2f2">Regular</span>
<div class="arr" style="left:928.6px;top:72.8px;border-top-color:#c4c4c4;transform:scale(.85)"></div>
<svg class="a" style="left:832px;top:84px" width="7" height="7.400" viewBox="0 0 7 7.400"><text x=".2" y="6.200" font-size="5" font-weight="bold" fill="#c9c9c9" font-family="Liberation Serif">T</text><text x="3" y="6.200" font-size="7" font-weight="bold" fill="#dcdcdc" font-family="Liberation Serif">T</text></svg>
<div class="spin" style="left:841px;top:84.3px;transform:scale(.85)"></div>
<div class="a" style="left:846.7px;top:84px;width:25.299999999999955px;height:7.3px;background:#4c4c4c;border-radius:.8px"></div>
<span class="t " style="left:848.8px;top:85.4px;color:#f2f2f2;font-size:5px">90 pt</span>
<div class="arr" style="left:873.2px;top:87px;border-top-color:#c4c4c4;transform:scale(.85)"></div>
<svg class="a" style="left:888.500px;top:84px" width="7" height="7.400" viewBox="0 0 7 7.400"><text x="1.800" y="6.500" font-size="5" font-weight="bold" fill="#c9c9c9" font-family="Liberation Serif">A</text><text x="1.800" y="3.300" font-size="4" font-weight="bold" fill="#c9c9c9" font-family="Liberation Serif">A</text><path d="M.8 1 V6.500" stroke="#c9c9c9" stroke-width=".6"/></svg>
<div class="spin" style="left:898px;top:84.3px;transform:scale(.85)"></div>
<div class="a" style="left:904px;top:84px;width:22.700000000000045px;height:7.3px;background:#4c4c4c;border-radius:.8px"></div>
<div class="arr" style="left:928.6px;top:87px;border-top-color:#c4c4c4;transform:scale(.85)"></div>
<svg class="a" style="left:832px;top:94.7px" width="7" height="7.400" viewBox="0 0 7 7.400"><text x="2" y="6.300" font-size="7" font-weight="bold" fill="#dcdcdc" font-family="Liberation Serif">T</text><path d="M.9 1 V6.500" stroke="#c9c9c9" stroke-width=".6"/></svg>
<div class="spin" style="left:841px;top:95.0px;transform:scale(.85)"></div>
<div class="a" style="left:846.7px;top:94.7px;width:25.299999999999955px;height:7.3px;background:#4c4c4c;border-radius:.8px"></div>
<span class="t " style="left:848.8px;top:96.10000000000001px;color:#f2f2f2;font-size:5px">100%</span>
<div class="arr" style="left:873.2px;top:97.7px;border-top-color:#c4c4c4;transform:scale(.85)"></div>
<svg class="a" style="left:888.500px;top:94.7px" width="7" height="7.400" viewBox="0 0 7 7.400"><text x=".8" y="5.300" font-size="6.500" font-weight="bold" fill="#dcdcdc" font-family="Liberation Serif">T</text><path d="M.5 6.800 H6.500" stroke="#c9c9c9" stroke-width=".6"/></svg>
<div class="spin" style="left:898px;top:95.0px;transform:scale(.85)"></div>
<div class="a" style="left:904px;top:94.7px;width:22.700000000000045px;height:7.3px;background:#4c4c4c;border-radius:.8px"></div>
<span class="t " style="left:906px;top:96.10000000000001px;color:#f2f2f2;font-size:5px">100%</span>
<div class="arr" style="left:928.6px;top:97.7px;border-top-color:#c4c4c4;transform:scale(.85)"></div>
<svg class="a" style="left:832px;top:105.3px" width="7" height="7.400" viewBox="0 0 7 7.400"><text x=".2" y="5.500" font-size="4.600" font-weight="bold" fill="#c9c9c9" font-family="Liberation Sans">VA</text><path d="M.5 6.800 H6.500" stroke="#c9c9c9" stroke-width=".5"/></svg>
<div class="spin" style="left:841px;top:105.6px;transform:scale(.85)"></div>
<div class="a" style="left:846.7px;top:105.3px;width:25.299999999999955px;height:7.3px;background:#4c4c4c;border-radius:.8px"></div>
<span class="t j" style="left:848.8px;top:106.7px;color:#f2f2f2;font-size:5px">オプティ.</span>
<div class="arr" style="left:873.2px;top:108.3px;border-top-color:#c4c4c4;transform:scale(.85)"></div>
<svg class="a" style="left:888.500px;top:105.3px" width="7" height="7.400" viewBox="0 0 7 7.400"><rect x=".6" y=".8" width="5.800" height="5.400" fill="#8f8f8f"/><text x=".8" y="5.300" font-size="4.200" font-weight="bold" fill="#e6e6e6" font-family="Liberation Sans">VA</text></svg>
<div class="spin" style="left:898px;top:105.6px;transform:scale(.85)"></div>
<div class="a" style="left:904px;top:105.3px;width:22.700000000000045px;height:7.3px;background:#4c4c4c;border-radius:.8px"></div>
<span class="t " style="left:906px;top:106.7px;color:#f2f2f2;font-size:5px">0</span>
<div class="arr" style="left:928.6px;top:108.3px;border-top-color:#c4c4c4;transform:scale(.85)"></div>
<svg class="a" style="left:832px;top:119.5px" width="7" height="7.400" viewBox="0 0 7 7.400"><rect x="1" y="1.500" width="5" height="4.500" fill="none" stroke="#b5b5b5" stroke-width=".6"/><text x="2" y="5.500" font-size="4.500" fill="#c9c9c9" font-family="Liberation Sans">あ</text></svg>
<div class="spin" style="left:841px;top:119.8px;transform:scale(.85)"></div>
<div class="a" style="left:846.7px;top:119.5px;width:25.299999999999955px;height:7.3px;background:#4c4c4c;border-radius:.8px"></div>
<span class="t " style="left:848.8px;top:120.9px;color:#f2f2f2;font-size:5px">0%</span>
<div class="arr" style="left:873.2px;top:122.5px;border-top-color:#c4c4c4;transform:scale(.85)"></div>
<svg class="a" style="left:832px;top:130px" width="7" height="7.400" viewBox="0 0 7 7.400"><rect x="2.500" y="1.500" width="4" height="4.500" fill="#9a9a9a"/><rect x=".5" y="1.500" width="2" height="4.500" fill="none" stroke="#b5b5b5" stroke-width=".5"/></svg>
<div class="a" style="left:841.5px;top:130px;width:30.5px;height:7.3px;background:#4c4c4c;border-radius:.8px"></div>
<span class="t j b" style="left:843.2px;top:131.4px;color:#f2f2f2;font-size:5px">自動</span>
<div class="arr" style="left:873.2px;top:133px;border-top-color:#c4c4c4;transform:scale(.85)"></div>
<svg class="a" style="left:888.500px;top:130px" width="7" height="7.400" viewBox="0 0 7 7.400"><rect x="2.500" y="1.500" width="4" height="4.500" fill="#9a9a9a"/><rect x=".5" y="1.500" width="2" height="4.500" fill="none" stroke="#b5b5b5" stroke-width=".5"/></svg>
<div class="a" style="left:898.5px;top:130px;width:28.200000000000045px;height:7.3px;background:#4c4c4c;border-radius:.8px"></div>
<span class="t j b" style="left:900.5px;top:131.4px;color:#f2f2f2;font-size:5px">自動</span>
<div class="arr" style="left:928.6px;top:133px;border-top-color:#c4c4c4;transform:scale(.85)"></div>
<svg class="a" style="left:832px;top:144px" width="7" height="7.400" viewBox="0 0 7 7.400"><text x=".3" y="5.800" font-size="4.800" font-weight="bold" fill="#c9c9c9" font-family="Liberation Serif">A</text><text x="3.600" y="4.600" font-size="3.600" font-weight="bold" fill="#c9c9c9" font-family="Liberation Serif">a</text><path d="M.5 6.800 H6" stroke="#c9c9c9" stroke-width=".5"/></svg>
<div class="spin" style="left:841px;top:144.3px;transform:scale(.85)"></div>
<div class="a" style="left:846.7px;top:144px;width:25.299999999999955px;height:7.3px;background:#4c4c4c;border-radius:.8px"></div>
<span class="t " style="left:848.8px;top:145.4px;color:#f2f2f2;font-size:5px">0 pt</span>
<div class="arr" style="left:873.2px;top:147px;border-top-color:#c4c4c4;transform:scale(.85)"></div>
<svg class="a" style="left:888.500px;top:144px" width="7" height="7.400" viewBox="0 0 7 7.400"><circle cx="3.500" cy="3.800" r="2.700" fill="none" stroke="#c9c9c9" stroke-width=".6"/><text x="2.200" y="5.500" font-size="4.500" font-weight="bold" fill="#dcdcdc" font-family="Liberation Serif">T</text></svg>
<div class="spin" style="left:898px;top:144.3px;transform:scale(.85)"></div>
<div class="a" style="left:904px;top:144px;width:22.700000000000045px;height:7.3px;background:#4c4c4c;border-radius:.8px"></div>
<span class="t " style="left:906px;top:145.4px;color:#f2f2f2;font-size:5px">0°</span>
<div class="arr" style="left:928.6px;top:147px;border-top-color:#c4c4c4;transform:scale(.85)"></div>
<span class="t " style="left:832.5px;top:158px;font-family:"Liberation Serif",serif;font-size:6.2px;color:#cacaca">TT</span>
<span class="t " style="left:846px;top:158px;font-family:"Liberation Serif",serif;font-size:6.2px;color:#cacaca">Tт</span>
<span class="t " style="left:873px;top:158px;font-family:"Liberation Serif",serif;font-size:6.2px;color:#cacaca">T¹</span>
<span class="t " style="left:886.5px;top:158px;font-family:"Liberation Serif",serif;font-size:6.2px;color:#cacaca">T₁</span>
<span class="t " style="left:916.5px;top:158px;font-family:"Liberation Serif",serif;font-size:6.2px;color:#cacaca">T</span>
<span class="t " style="left:929px;top:158px;font-family:"Liberation Serif",serif;font-size:6.2px;color:#cacaca">Ŧ</span>
<div class="a" style="left:916.3px;top:164.2px;width:4px;height:0.5px;background:#bdbdbd;"></div>
<div class="a" style="left:832px;top:168px;width:40px;height:7.3px;background:#4c4c4c;border-radius:.8px"></div>
<span class="t j b" style="left:833.8px;top:169.5px;color:#f2f2f2">英語 : 米国</span>
<div class="arr" style="left:873.2px;top:171px;border-top-color:#c4c4c4;transform:scale(.85)"></div>
<span class="t " style="left:889px;top:169.3px;color:#c4c4c4;font-size:5px">a<span style="font-size:3.6px">a</span></span>
<div class="a" style="left:897.5px;top:168px;width:29.2px;height:7.3px;background:#4c4c4c;border-radius:.8px"></div>
<div class="arr" style="left:928.6px;top:171px;border-top-color:#c4c4c4;transform:scale(.85)"></div>
<span class="t j b" style="left:832px;top:184.6px;color:#e2e2e2;font-size:4.700px">グリフにスナップ</span>
<svg class="a" style="left:913px;top:183.400px" width="22" height="7" viewBox="0 0 22 7"><g fill="none" stroke="#bdbdbd" stroke-width=".6"><rect x="1" y="1.800" width="5" height="4"/><path d="M1 3.200 H6 M3.500 3.200 V5.800"/><circle cx="17.800" cy="3.500" r="2.700"/><path d="M17.800 2.200 V3.800 M17.800 4.600 V5"/></g></svg>
<div class="a" style="left:832px;top:196px;width:8.6px;height:8.6px;background:#2c2c2c;border-radius:.8px;border:.5px solid #686868"></div>
<span class="t " style="left:834.6px;top:197.9px;font-size:5px;color:#f0f0f0;font-weight:bold">A</span>
<div class="a" style="left:833.3px;top:202.3px;width:6px;height:0.5px;background:#d0d0d0;"></div>
<div class="a" style="left:847.5px;top:196px;width:8.6px;height:8.6px;background:#2c2c2c;border-radius:.8px;border:.5px solid #686868"></div>
<span class="t " style="left:850.1px;top:197.9px;font-size:5px;color:#f0f0f0;font-weight:bold">A</span>
<div class="a" style="left:848.8px;top:202.3px;width:6px;height:0.5px;background:#d0d0d0;"></div>
<div class="a" style="left:865.5px;top:196px;width:8.6px;height:8.6px;background:#2c2c2c;border-radius:.8px;border:.5px solid #686868"></div>
<span class="t " style="left:868.1px;top:197.9px;font-size:5px;color:#f0f0f0;font-weight:bold">A</span>
<div class="a" style="left:866.8px;top:202.3px;width:6px;height:0.5px;background:#d0d0d0;"></div>
<div class="a" style="left:883.5px;top:196px;width:8.6px;height:8.6px;background:#2c2c2c;border-radius:.8px;border:.5px solid #686868"></div>
<span class="t " style="left:884.7px;top:197.9px;font-size:4.2px;color:#f0f0f0;font-weight:bold">Aa</span>
<div class="a" style="left:910.7px;top:196px;width:8.6px;height:8.6px;background:#2c2c2c;border-radius:.8px;border:.5px solid #686868"></div>
<span class="t " style="left:913.3000000000001px;top:197.9px;font-size:5px;color:#f0f0f0;font-weight:bold">A</span>
<div class="a" style="left:926.2px;top:196px;width:8.6px;height:8.6px;background:#2c2c2c;border-radius:.8px;border:.5px solid #686868"></div>
<span class="t " style="left:928.8000000000001px;top:197.9px;font-size:5px;color:#f0f0f0;font-weight:bold">A</span>
<div class="a" style="left:829.4px;top:209.5px;width:108px;height:136.5px;background:#535353;"></div>
<div class="a" style="left:829.4px;top:209.5px;width:108px;height:10px;background:#454545;"></div>
<div class="a" style="left:830.5px;top:209.5px;width:18.5px;height:10px;background:#535353;"></div>
<span class="t j b" style="left:834.7px;top:212.3px;color:#f0f0f0;font-size:4.450px">変形</span>
<span class="t j" style="left:851.5px;top:212.3px;color:#a2a2a2;font-size:4.400px">整列</span>
<span class="t j" style="left:868px;top:212.3px;color:#a2a2a2;font-size:4.400px">パスファインダー</span>
<div class="a" style="left:931.4px;top:213.0px;width:3.2px;height:0.55px;background:#8e8e8e;"></div>
<div class="a" style="left:931.4px;top:214.3px;width:3.2px;height:0.55px;background:#8e8e8e;"></div>
<div class="a" style="left:931.4px;top:215.6px;width:3.2px;height:0.55px;background:#8e8e8e;"></div>
<svg class="a" style="left:831px;top:228px" width="8.500" height="8.500" viewBox="0 0 8.500 8.500"><rect x=".3" y=".3" width="7.900" height="7.900" fill="#6a6a6a" stroke="#8a8a8a" stroke-width=".5"/><g fill="#e8e8e8"><rect x="1.300" y="1.300" width="1.200" height="1.200"/><rect x="3.650" y="1.300" width="1.200" height="1.200"/><rect x="6" y="1.300" width="1.200" height="1.200"/><rect x="1.300" y="3.650" width="1.200" height="1.200"/><rect x="3.300" y="3.300" width="1.900" height="1.900" fill="#fff"/><rect x="6" y="3.650" width="1.200" height="1.200"/><rect x="1.300" y="6" width="1.200" height="1.200"/><rect x="3.650" y="6" width="1.200" height="1.200"/><rect x="6" y="6" width="1.200" height="1.200"/></g></svg>
<span class="t " style="left:843.3px;top:226.2px;color:#b0b0b0;font-size:4.8px">X:</span>
<div class="a" style="left:849.8px;top:224.6px;width:30px;height:7.3px;background:#4c4c4c;border-radius:.8px"></div>
<span class="t " style="left:852px;top:226px;color:#f4f4f4;font-size:5.300px">883.0056 c</span>
<span class="t " style="left:883.8px;top:226.2px;color:#b0b0b0;font-size:4.8px">W:</span>
<div class="a" style="left:892.8px;top:224.6px;width:31px;height:7.3px;background:#4c4c4c;border-radius:.8px"></div>
<span class="t " style="left:894.8px;top:226px;color:#f4f4f4;font-size:5.300px">114.0252 c</span>
<span class="t " style="left:843.3px;top:236.79999999999998px;color:#b0b0b0;font-size:4.8px">Y:</span>
<div class="a" style="left:849.8px;top:235.2px;width:30px;height:7.3px;background:#4c4c4c;border-radius:.8px"></div>
<span class="t " style="left:852px;top:236.6px;color:#f4f4f4;font-size:5.300px">276.1084 c</span>
<span class="t " style="left:883.8px;top:236.79999999999998px;color:#b0b0b0;font-size:4.8px">H:</span>
<div class="a" style="left:892.8px;top:235.2px;width:31px;height:7.3px;background:#4c4c4c;border-radius:.8px"></div>
<span class="t " style="left:894.8px;top:236.6px;color:#f4f4f4;font-size:5.300px">127.9312 c</span>
<div class="a" style="left:927px;top:227.6px;width:7.6px;height:10px;background:#2b2b2b;border-radius:1px"></div>
<svg class="a" style="left:928.800px;top:229.400px" width="4" height="6.400" viewBox="0 0 4 6.400"><rect x=".9" y=".5" width="2.200" height="2.600" rx="1" fill="none" stroke="#eee" stroke-width=".7"/><rect x=".9" y="3.300" width="2.200" height="2.600" rx="1" fill="none" stroke="#eee" stroke-width=".7"/></svg>
<svg class="a" style="left:841.500px;top:246.500px" width="6" height="5" viewBox="0 0 6 5"><path d="M.5 4.400 H5.500 M.5 4.400 L4 1" stroke="#bdbdbd" stroke-width=".6" fill="none"/></svg>
<div class="a" style="left:849.8px;top:245.3px;width:18px;height:7.3px;background:#4c4c4c;border-radius:.8px"></div>
<span class="t " style="left:852px;top:246.9px;color:#f4f4f4;font-size:5.300px">6.139°</span>
<div class="arr" style="left:871.5px;top:248.3px;border-top-color:#c4c4c4;transform:scale(.85)"></div>
<svg class="a" style="left:880px;top:246.300px" width="6" height="5.500" viewBox="0 0 6 5.500"><path d="M1.500 4.800 L3 .8 H5.300 L3.800 4.800Z" fill="#cfcfcf"/></svg>
<div class="a" style="left:888.8px;top:245.3px;width:19.5px;height:7.3px;background:#4c4c4c;border-radius:.8px"></div>
<span class="t " style="left:890.6px;top:246.9px;color:#f4f4f4;font-size:5.300px">0°</span>
<div class="arr" style="left:910.3px;top:248.3px;border-top-color:#c4c4c4;transform:scale(.85)"></div>
<div class="a" style="left:829.4px;top:256.2px;width:108px;height:0.6px;background:#474747;"></div>
<span class="t j" style="left:861.3px;top:289.2px;color:#7d7d7d;font-size:4.900px">シェイプの属性なし</span>
<div class="a" style="left:829.4px;top:323.8px;width:108px;height:0.6px;background:#474747;"></div>
<div class="a" style="left:832.2px;top:329.3px;width:4.2px;height:4.2px;background:transparent;border:.6px solid #c8c8c8;border-radius:.5px"></div>
<span class="t j b" style="left:839.2px;top:329.1px;color:#efefef">角を拡大・縮小</span>
<div class="a" style="left:832.2px;top:337.5px;width:4.2px;height:4.2px;background:transparent;border:.6px solid #c8c8c8;border-radius:.5px"></div>
<span class="t j b" style="left:839.2px;top:337.3px;color:#efefef">線幅と効果を拡大・縮小</span>
<div class="a" style="left:829.4px;top:346px;width:108px;height:254px;background:#535353;"></div>
<div class="a" style="left:829.4px;top:346px;width:108px;height:10px;background:#454545;"></div>
<div class="a" style="left:830.5px;top:346px;width:32.5px;height:10px;background:#535353;"></div>
<span class="t j b" style="left:832.6px;top:348.8px;color:#f0f0f0;font-size:4.450px">アピアランス</span>
<span class="t j" style="left:867.5px;top:348.8px;color:#a2a2a2;font-size:4.400px">グラフィックスタイル</span>
<div class="a" style="left:931.4px;top:349.5px;width:3.2px;height:0.55px;background:#8e8e8e;"></div>
<div class="a" style="left:931.4px;top:350.8px;width:3.2px;height:0.55px;background:#8e8e8e;"></div>
<div class="a" style="left:931.4px;top:352.1px;width:3.2px;height:0.55px;background:#8e8e8e;"></div>
<div class="a" style="left:829.4px;top:358.5px;width:108px;height:66px;background:#525252;"></div>
<div class="a" style="left:829.4px;top:371.2px;width:108px;height:0.5px;background:#484848;"></div>
<div class="a" style="left:829.4px;top:381.8px;width:108px;height:0.5px;background:#484848;"></div>
<div class="a" style="left:829.4px;top:392.2px;width:108px;height:0.5px;background:#484848;"></div>
<div class="a" style="left:829.4px;top:402.6px;width:108px;height:0.5px;background:#484848;"></div>
<div class="a" style="left:829.4px;top:413px;width:108px;height:0.5px;background:#484848;"></div>
<div class="a" style="left:829.4px;top:424.3px;width:108px;height:0.5px;background:#484848;"></div>
<div class="a" style="left:832.2px;top:362.6px;width:7.6px;height:7px;background:#4f6a17;border:.8px solid #a5b06f"></div>
<span class="t j b" style="left:852px;top:363.8px;color:#f2f2f2">パス</span>
<svg class="a" style="left:833.6px;top:375px" width="5.600" height="3.600" viewBox="0 0 5.600 3.600"><path d="M.3 1.800 C1.500 .2 4.100 .2 5.300 1.800 C4.100 3.400 1.500 3.400 .3 1.800Z" fill="#c9c9c9"/><circle cx="2.800" cy="1.800" r=".8" fill="#4f4f4f"/></svg>
<svg class="a" style="left:844.500px;top:375.6px" width="4" height="3" viewBox="0 0 4 3"><path d="M.5 .6 L2 2.300 L3.500 .6" fill="none" stroke="#b8b8b8" stroke-width=".7"/></svg>
<span class="t j b" style="left:852px;top:374.5px;color:#f2f2f2">線:</span>
<div class="a" style="left:880.8px;top:373px;width:7.2px;height:7px;background:#fff;overflow:hidden"></div>
<div class="a" style="left:879.500px;top:375.900px;width:10px;height:1.300px;background:#e02f2f;transform:rotate(-45deg)"></div>
<div class="a" style="left:882.9px;top:375px;width:3px;height:3px;background:#fff;border:.5px solid #bbb"></div>
<svg class="a" style="left:833.6px;top:385.6px" width="5.600" height="3.600" viewBox="0 0 5.600 3.600"><path d="M.3 1.800 C1.500 .2 4.100 .2 5.300 1.800 C4.100 3.400 1.500 3.400 .3 1.800Z" fill="#6f6f6f"/><circle cx="2.800" cy="1.800" r=".8" fill="#4f4f4f"/></svg>
<span class="t j" style="left:862.7px;top:385.6px;color:#efefef;border-bottom:.4px solid #bbb;font-size:4.400px">不透明度:</span>
<span class="t j" style="left:896.8px;top:386px;color:#dedede;font-size:4.800px">初期設定</span>
<svg class="a" style="left:833.6px;top:395.8px" width="5.600" height="3.600" viewBox="0 0 5.600 3.600"><path d="M.3 1.800 C1.500 .2 4.100 .2 5.300 1.800 C4.100 3.400 1.500 3.400 .3 1.800Z" fill="#c9c9c9"/><circle cx="2.800" cy="1.800" r=".8" fill="#4f4f4f"/></svg>
<svg class="a" style="left:844.500px;top:396.4px" width="4" height="3" viewBox="0 0 4 3"><path d="M.5 .6 L2 2.300 L3.500 .6" fill="none" stroke="#b8b8b8" stroke-width=".7"/></svg>
<span class="t j b" style="left:852px;top:395.3px;color:#f2f2f2">塗り:</span>
<div class="a" style="left:880.8px;top:393.7px;width:7.2px;height:7px;background:#4f6a17;border:.8px solid #c9cfa8"></div>
<svg class="a" style="left:833.6px;top:406.2px" width="5.600" height="3.600" viewBox="0 0 5.600 3.600"><path d="M.3 1.800 C1.500 .2 4.100 .2 5.300 1.800 C4.100 3.400 1.500 3.400 .3 1.800Z" fill="#6f6f6f"/><circle cx="2.800" cy="1.800" r=".8" fill="#4f4f4f"/></svg>
<span class="t j" style="left:862.7px;top:406.2px;color:#efefef;border-bottom:.4px solid #bbb;font-size:4.400px">不透明度:</span>
<span class="t j" style="left:896.8px;top:406.6px;color:#dedede;font-size:4.800px">初期設定</span>
<svg class="a" style="left:833.6px;top:416.6px" width="5.600" height="3.600" viewBox="0 0 5.600 3.600"><path d="M.3 1.800 C1.500 .2 4.100 .2 5.300 1.800 C4.100 3.400 1.500 3.400 .3 1.800Z" fill="#6f6f6f"/><circle cx="2.800" cy="1.800" r=".8" fill="#4f4f4f"/></svg>
<span class="t j" style="left:852.5px;top:416.8px;color:#efefef;border-bottom:.4px solid #bbb;font-size:4.400px">不透明度:</span>
<span class="t j" style="left:886.7px;top:417.2px;color:#dedede;font-size:4.800px">初期設定</span>
<div class="a" style="left:829.4px;top:591.3px;width:108px;height:0.5px;background:#4c4c4c;"></div>
<svg class="a" style="left:832px;top:591.500px" width="100" height="8" viewBox="0 0 100 8"><g fill="none" stroke="#d6d6d6" stroke-width=".8"><rect x="1.800" y="1.500" width="5" height="5" fill="#e6e6e6"/><rect x="3.300" y="3" width="2" height="2" fill="#535353" stroke="none"/><rect x="12.500" y="1.700" width="4.600" height="4.600" fill="#cfcfcf"/><text x="23.500" y="6" font-size="5" fill="#cfcfcf" stroke="none" font-family="Liberation Serif" font-style="italic">fx.</text><circle cx="70.800" cy="4" r="2.400"/><path d="M69.200 5.600 L72.400 2.400"/><rect x="79" y="2" width="4.500" height="4.500" stroke="#6e6e6e"/><path d="M90 2.500 h4 v4.500 h-4z M89.200 2.500 h5.600" stroke="#6e6e6e"/></g></svg><!-- DOCK COLUMN 2 -->
<div class="a" style="left:940.6px;top:44.8px;width:109px;height:82.7px;background:#535353;"></div>
<div class="a" style="left:940.6px;top:44.8px;width:108.99999999999989px;height:10px;background:#454545;"></div>
<div class="a" style="left:941.4px;top:44.8px;width:21.3px;height:10px;background:#535353;"></div>
<span class="t j b" style="left:946.5px;top:47.599999999999994px;color:#f0f0f0;font-size:4.450px">カラー</span>
<span class="t j" style="left:967.2px;top:47.599999999999994px;color:#a2a2a2;font-size:4.400px">カラーガイド</span>
<div class="a" style="left:1043.6px;top:48.3px;width:3.2px;height:0.55px;background:#8e8e8e;"></div>
<div class="a" style="left:1043.6px;top:49.599999999999994px;width:3.2px;height:0.55px;background:#8e8e8e;"></div>
<div class="a" style="left:1043.6px;top:50.9px;width:3.2px;height:0.55px;background:#8e8e8e;"></div>
<svg class="a" style="left:941.500px;top:57.500px" width="14" height="6" viewBox="0 0 14 6"><rect x=".8" y=".8" width="2.200" height="2.200" fill="#e6e6e6"/><rect x="2" y="2" width="2.200" height="2.200" fill="#222" stroke="#ddd" stroke-width=".4"/><path d="M9.500 1.500 C11.500 1.300 12.500 2.500 12.400 4.500" fill="none" stroke="#d4d4d4" stroke-width=".8"/><path d="M8.600 1.500 l1.500-1 v2z M12.400 5.500 l-1-1.500 h2z" fill="#d4d4d4"/></svg>
<div class="a" style="left:946.3px;top:70px;width:7.5px;height:7.5px;background:#fff;overflow:hidden"></div>
<div class="a" style="left:945px;top:73.100px;width:10.500px;height:1.300px;background:#e02f2f;transform:rotate(-45deg)"></div>
<div class="a" style="left:948.5px;top:72.2px;width:3.1px;height:3.1px;background:#535353;"></div>
<div class="a" style="left:948px;top:73.200px;width:4px;height:1px;background:#e02f2f;transform:rotate(-45deg)"></div>
<div class="a" style="left:942.2px;top:65.5px;width:7.8px;height:7.3px;background:#4f6a17;border:.8px solid #a5b06f"></div>
<span class="t " style="left:961.6px;top:60.400000000000006px;font-size:5px;color:#bdbdbd">H</span>
<div class="a" style="left:968px;top:61.900000000000006px;width:48px;height:2.1px;background:linear-gradient(90deg,#7a2a14,#70681a 14%,#2d7a1e 32%,#1c6a66 48%,#1f2a8c 64%,#6a1c7c 82%,#8a1c2a);"></div>
<svg class="a" style="left:976.0px;top:64.0px" width="4.400" height="3" viewBox="0 0 4.400 3"><path d="M2.200 0 L4.400 3 H0Z" fill="#f0f0f0"/></svg>
<div class="a" style="left:1019.8px;top:58.900000000000006px;width:13.2px;height:7px;background:#4c4c4c;border-radius:.8px"></div>
<span class="t " style="left:1021px;top:60.300000000000004px;font-size:5px;color:#f2f2f2">74.8</span>
<span class="t " style="left:1035px;top:60.300000000000004px;font-size:5px;color:#c4c4c4">°</span>
<span class="t " style="left:961.6px;top:74.0px;font-size:5px;color:#bdbdbd">S</span>
<div class="a" style="left:968px;top:75.5px;width:48px;height:2.1px;background:linear-gradient(90deg,#6a6a6a,#66701f 60%,#5f7312);"></div>
<svg class="a" style="left:1001.8px;top:77.6px" width="4.400" height="3" viewBox="0 0 4.400 3"><path d="M2.200 0 L4.400 3 H0Z" fill="#f0f0f0"/></svg>
<div class="a" style="left:1019.8px;top:72.5px;width:13.2px;height:7px;background:#4c4c4c;border-radius:.8px"></div>
<span class="t " style="left:1021px;top:73.89999999999999px;font-size:5px;color:#f2f2f2">75.4</span>
<span class="t " style="left:1035.3px;top:73.89999999999999px;font-size:5px;color:#c4c4c4">%</span>
<span class="t " style="left:961.6px;top:88.2px;font-size:5px;color:#bdbdbd">B</span>
<div class="a" style="left:968px;top:89.7px;width:48px;height:2.1px;background:linear-gradient(90deg,#000,#4f6117 38%,#a4c934 70%,#cdf53c);"></div>
<svg class="a" style="left:985.3px;top:91.8px" width="4.400" height="3" viewBox="0 0 4.400 3"><path d="M2.200 0 L4.400 3 H0Z" fill="#f0f0f0"/></svg>
<div class="a" style="left:1019.8px;top:86.7px;width:13.2px;height:7px;background:#4c4c4c;border-radius:.8px"></div>
<span class="t " style="left:1021px;top:88.1px;font-size:5px;color:#f2f2f2">40</span>
<span class="t " style="left:1035.3px;top:88.1px;font-size:5px;color:#c4c4c4">%</span>
<svg class="a" style="left:943.500px;top:83.500px" width="6" height="17" viewBox="0 0 6 17"><circle cx="2.800" cy="3" r="2.200" fill="#8c8c8c" stroke="#9e9e9e" stroke-width=".5"/><path d="M2.800 11.300 L5.300 15.600 H.3Z" fill="#d0d0d0"/><path d="M2.800 12.800 V14.200 M2.800 14.700 V15.100" stroke="#444" stroke-width=".6"/></svg>
<div class="a" style="left:951.8px;top:83.5px;width:6.1px;height:6.3px;background:#4f6a17;border:.7px solid #a5b06f"></div>
<div class="a" style="left:951.8px;top:93.3px;width:6.1px;height:6.3px;background:#4f6a17;border:.7px solid #a5b06f"></div>
<div class="a" style="left:941.8px;top:102.7px;width:5.3px;height:6px;background:#fff;overflow:hidden;border-radius:.5px"></div>
<div class="a" style="left:940.800px;top:105.100px;width:7.500px;height:1.200px;background:#e02f2f;transform:rotate(-47deg)"></div>
<div class="a" style="left:947.4px;top:102.7px;width:5.2px;height:6px;background:#000;"></div>
<div class="a" style="left:952.9px;top:102.7px;width:5.3px;height:6px;background:#fff;"></div>
<span class="t " style="left:1008.3px;top:104px;font-size:5px;color:#d0d0d0">#</span>
<div class="a" style="left:1013.7px;top:102.5px;width:26.5px;height:7.2px;background:#4c4c4c;border-radius:.8px"></div>
<span class="t " style="left:1015.3px;top:103.9px;font-size:5px;color:#f2f2f2">536619</span>
<div class="a" style="left:941.8px;top:112.7px;width:100.7px;height:9.8px;background:linear-gradient(90deg,#f00,#ff0 17%,#0f0 33%,#0ff 50%,#00f 67%,#f0f 83%,#f00);border-radius:.6px"></div>
<div class="a" style="left:941.8px;top:112.7px;width:100.7px;height:9.8px;background:linear-gradient(180deg,rgba(255,255,255,.95),rgba(255,255,255,0) 38%,rgba(0,0,0,0) 55%,rgba(0,0,0,.92));border-radius:.6px"></div>
<div class="a" style="left:940.6px;top:127.5px;width:109px;height:148px;background:#535353;"></div>
<div class="a" style="left:940.6px;top:127.5px;width:108.99999999999989px;height:10px;background:#454545;"></div>
<div class="a" style="left:941.4px;top:127.5px;width:27px;height:10px;background:#535353;"></div>
<span class="t j b" style="left:943.6px;top:130.3px;color:#f0f0f0;font-size:4.450px">スウォッチ</span>
<span class="t j" style="left:973.4px;top:130.3px;color:#a2a2a2;font-size:4.400px">ブラシ</span>
<span class="t j" style="left:994.7px;top:130.3px;color:#a2a2a2;font-size:4.400px">シンボル</span>
<div class="a" style="left:1043.6px;top:131.0px;width:3.2px;height:0.55px;background:#8e8e8e;"></div>
<div class="a" style="left:1043.6px;top:132.3px;width:3.2px;height:0.55px;background:#8e8e8e;"></div>
<div class="a" style="left:1043.6px;top:133.6px;width:3.2px;height:0.55px;background:#8e8e8e;"></div>
<div class="a" style="left:946.5px;top:145px;width:7.5px;height:7.6px;background:#fff;overflow:hidden"></div>
<div class="a" style="left:945.200px;top:148.200px;width:10.500px;height:1.300px;background:#e02f2f;transform:rotate(-45deg)"></div>
<div class="a" style="left:948.7px;top:147.2px;width:3.1px;height:3.1px;background:#535353;"></div>
<div class="a" style="left:948.200px;top:148.300px;width:4px;height:1px;background:#e02f2f;transform:rotate(-45deg)"></div>
<div class="a" style="left:942px;top:140.5px;width:7.6px;height:7.7px;background:#4f6a17;border:.8px solid #a5b06f"></div>
<svg class="a" style="left:1029.500px;top:141.500px" width="6" height="7.500" viewBox="0 0 6 7.500"><g fill="#7d7d7d"><rect x=".5" y=".6" width="5" height="1.300"/><rect x=".5" y="2.400" width="5" height="1.300"/><rect x=".5" y="4.200" width="5" height="1.300"/><rect x=".5" y="6" width="5" height="1.300"/></g></svg>
<div class="a" style="left:1038.8px;top:141.2px;width:7.8px;height:8.2px;background:#2a2a2a;border-radius:.8px"></div>
<svg class="a" style="left:1039.800px;top:142.300px" width="6" height="6" viewBox="0 0 6 6"><rect x=".3" y=".3" width="5.400" height="5.400" fill="#f4f4f4"/><path d="M2 .3 V5.700 M4 .3 V5.700 M.3 2 H5.700 M.3 4 H5.700" stroke="#444" stroke-width=".35"/></svg>
<svg class="a" style="left:0;top:0" width="1067" height="200" viewBox="0 0 1067 200"><defs><linearGradient id="sg1"><stop offset="0" stop-color="#fff"/><stop offset="1" stop-color="#000"/></linearGradient><linearGradient id="sg2"><stop offset="0" stop-color="#e8f4ff"/><stop offset="1" stop-color="#1e7fd6"/></linearGradient><linearGradient id="sg3"><stop offset="0" stop-color="#fff"/><stop offset="1" stop-color="#f08ab8"/></linearGradient><linearGradient id="sg4"><stop offset="0" stop-color="#ffe08a"/><stop offset="1" stop-color="#f0861e"/></linearGradient><linearGradient id="sg5"><stop offset="0" stop-color="#fff"/><stop offset="1" stop-color="#d6d6c0"/></linearGradient><linearGradient id="sg6"><stop offset="0" stop-color="#2a6fc4"/><stop offset="1" stop-color="#7ac0f0"/></linearGradient><linearGradient id="sg7"><stop offset="0" stop-color="#fff"/><stop offset="1" stop-color="#a6d6b0"/></linearGradient></defs><rect x="942.1" y="155" width="5.5200000000000005" height="5.7" fill="#fff"/><path d="M942.3000000000001 160.5 L947.42 155.2" stroke="#e02f2f" stroke-width="1.1"/><rect x="947.92" y="155" width="5.5200000000000005" height="5.7" fill="#fff"/><circle cx="950.68" cy="157.85" r="1.4" fill="none" stroke="#333" stroke-width=".6"/><path d="M950.68 155.8 V159.89999999999998 M948.7199999999999 157.85 H952.64" stroke="#333" stroke-width=".4"/><rect x="953.74" y="155" width="5.5200000000000005" height="5.7" fill="#ffffff"/><rect x="959.56" y="155" width="5.5200000000000005" height="5.7" fill="#000000"/><rect x="965.38" y="155" width="5.5200000000000005" height="5.7" fill="#ed1c24"/><rect x="971.2" y="155" width="5.5200000000000005" height="5.7" fill="#fff200"/><rect x="977.02" y="155" width="5.5200000000000005" height="5.7" fill="#00e625"/><rect x="982.84" y="155" width="5.5200000000000005" height="5.7" fill="#00e8f0"/><rect x="988.66" y="155" width="5.5200000000000005" height="5.7" fill="#1414e6"/><rect x="994.48" y="155" width="5.5200000000000005" height="5.7" fill="#f21af2"/><rect x="1000.3" y="155" width="5.5200000000000005" height="5.7" fill="#e3261e"/><rect x="1006.12" y="155" width="5.5200000000000005" height="5.7" fill="#ee3a1e"/><rect x="1011.94" y="155" width="5.5200000000000005" height="5.7" fill="#f26a21"/><rect x="1017.76" y="155" width="5.5200000000000005" height="5.7" fill="#f7931e"/><rect x="1023.58" y="155" width="5.5200000000000005" height="5.7" fill="#fbb03b"/><rect x="1029.4" y="155" width="5.5200000000000005" height="5.7" fill="#fcee21"/><rect x="1035.22" y="155" width="5.5200000000000005" height="5.7" fill="#f2e616"/><rect x="942.1" y="161.1" width="5.5200000000000005" height="5.7" fill="#8cc63f"/><rect x="947.92" y="161.1" width="5.5200000000000005" height="5.7" fill="#39b54a"/><rect x="953.74" y="161.1" width="5.5200000000000005" height="5.7" fill="#009245"/><rect x="959.56" y="161.1" width="5.5200000000000005" height="5.7" fill="#006837"/><rect x="965.38" y="161.1" width="5.5200000000000005" height="5.7" fill="#22b573"/><rect x="971.2" y="161.1" width="5.5200000000000005" height="5.7" fill="#00a99d"/><rect x="977.02" y="161.1" width="5.5200000000000005" height="5.7" fill="#29abe2"/><rect x="982.84" y="161.1" width="5.5200000000000005" height="5.7" fill="#0071bc"/><rect x="988.66" y="161.1" width="5.5200000000000005" height="5.7" fill="#2e3192"/><rect x="994.48" y="161.1" width="5.5200000000000005" height="5.7" fill="#1b1464"/><rect x="1000.3" y="161.1" width="5.5200000000000005" height="5.7" fill="#662d91"/><rect x="1006.12" y="161.1" width="5.5200000000000005" height="5.7" fill="#93278f"/><rect x="1011.94" y="161.1" width="5.5200000000000005" height="5.7" fill="#9e005d"/><rect x="1017.76" y="161.1" width="5.5200000000000005" height="5.7" fill="#d4145a"/><rect x="1023.58" y="161.1" width="5.5200000000000005" height="5.7" fill="#ed1e79"/><rect x="1029.4" y="161.1" width="5.5200000000000005" height="5.7" fill="#c7b299"/><rect x="1035.22" y="161.1" width="5.5200000000000005" height="5.7" fill="#998675"/><rect x="942.1" y="167.3" width="5.5200000000000005" height="5.7" fill="#736357"/><rect x="947.92" y="167.3" width="5.5200000000000005" height="5.7" fill="#534741"/><rect x="953.74" y="167.3" width="5.5200000000000005" height="5.7" fill="#c69c6d"/><rect x="959.56" y="167.3" width="5.5200000000000005" height="5.7" fill="#a67c52"/><rect x="965.38" y="167.3" width="5.5200000000000005" height="5.7" fill="#8c6239"/><rect x="971.2" y="167.3" width="5.5200000000000005" height="5.7" fill="#754c24"/><rect x="977.02" y="167.3" width="5.5200000000000005" height="5.7" fill="#603813"/><rect x="982.84" y="167.3" width="5.5200000000000005" height="5.7" fill="#42210b"/><rect x="988.66" y="167.3" width="5.5200000000000005" height="5.7" fill="url(#sg1)"/><rect x="994.48" y="167.3" width="5.5200000000000005" height="5.7" fill="url(#sg2)"/><rect x="1000.3" y="167.3" width="5.5200000000000005" height="5.7" fill="url(#sg3)"/><rect x="1006.12" y="167.3" width="5.5200000000000005" height="5.7" fill="url(#sg4)"/><rect x="1011.94" y="167.3" width="5.5200000000000005" height="5.7" fill="url(#sg5)"/><rect x="1017.76" y="167.3" width="5.5200000000000005" height="5.7" fill="url(#sg6)"/><rect x="1023.58" y="167.3" width="5.5200000000000005" height="5.7" fill="url(#sg7)"/><path d="M942.7 174.9 h2 l.5 .6 h1.800 v3.200 h-4.300z" fill="#e2e2e2"/><rect x="947.92" y="173.9" width="5.5200000000000005" height="5.7" fill="#000000"/><rect x="953.74" y="173.9" width="5.5200000000000005" height="5.7" fill="#1a1a1a"/><rect x="959.56" y="173.9" width="5.5200000000000005" height="5.7" fill="#333333"/><rect x="965.38" y="173.9" width="5.5200000000000005" height="5.7" fill="#4d4d4d"/><rect x="971.2" y="173.9" width="5.5200000000000005" height="5.7" fill="#666666"/><rect x="977.02" y="173.9" width="5.5200000000000005" height="5.7" fill="#808080"/><rect x="982.84" y="173.9" width="5.5200000000000005" height="5.7" fill="#999999"/><rect x="988.66" y="173.9" width="5.5200000000000005" height="5.7" fill="#b3b3b3"/><rect x="994.48" y="173.9" width="5.5200000000000005" height="5.7" fill="#cccccc"/><rect x="1000.3" y="173.9" width="5.5200000000000005" height="5.7" fill="#e6e6e6"/><rect x="1006.12" y="173.9" width="5.5200000000000005" height="5.7" fill="#ffffff"/><path d="M942.7 181.2 h2 l.5 .6 h1.800 v3.200 h-4.300z" fill="#e2e2e2"/><rect x="947.92" y="180.2" width="5.5200000000000005" height="5.7" fill="#3fa9f5"/><rect x="953.74" y="180.2" width="5.5200000000000005" height="5.7" fill="#7ac943"/><rect x="959.56" y="180.2" width="5.5200000000000005" height="5.7" fill="#ff931e"/><rect x="965.38" y="180.2" width="5.5200000000000005" height="5.7" fill="#ff1d25"/><rect x="971.2" y="180.2" width="5.5200000000000005" height="5.7" fill="#ff7bac"/><rect x="977.02" y="180.2" width="5.5200000000000005" height="5.7" fill="#c9d6dc"/></svg>
<svg class="a" style="left:941px;top:268px" width="108" height="8" viewBox="0 0 108 8"><g fill="none" stroke="#d0d0d0" stroke-width=".7"><path d="M2 1.500 V6.500 M3.800 1.500 V6.500 M5.500 2 L7 6.500"/><path d="M12 4.800 l1.200 1.300 1.200-1.300" stroke="#aaa"/><rect x="48.500" y="1.800" width="4.500" height="4.500" fill="#d8d8d8"/><path d="M49.500 5.500 L52 3" stroke="#535353"/><rect x="60" y="2" width="4.500" height="4.200" stroke="#6e6e6e"/><path d="M70.500 3 H73 L73.800 3.800 H76.500 V6.500 H70.500Z" fill="#dcdcdc"/><rect x="82" y="1.800" width="4.600" height="4.600"/><path d="M84.300 3 V5.200 M83.200 4.100 H85.400"/><path d="M93.500 2.500 h4 v4.500 h-4z M92.700 2.500 h5.600" stroke="#6e6e6e"/></g></svg>
<div class="a" style="left:940.6px;top:275.4px;width:109px;height:1.8px;background:#3c3c3c;"></div>
<div class="a" style="left:940.6px;top:277.2px;width:109px;height:145.3px;background:#535353;"></div>
<div class="a" style="left:958.2px;top:278.8px;width:91.4px;height:8.8px;background:#454545;"></div>
<div class="a" style="left:958.2px;top:278.8px;width:40px;height:8.8px;background:#4c4c4c;"></div>
<div class="a" style="left:945.5px;top:280.2px;width:4.8px;height:4.5px;background:#f0f0f0;border-radius:.4px"></div>
<span class="t j" style="left:962.2px;top:281.1px;color:#c9c9c9;font-size:4.400px">グラデーション</span>
<span class="t j" style="left:1001.4px;top:281.1px;color:#a2a2a2;font-size:4.400px">透明</span>
<div class="a" style="left:1043.6px;top:281.4px;width:3.2px;height:0.55px;background:#8e8e8e;"></div>
<div class="a" style="left:1043.6px;top:282.7px;width:3.2px;height:0.55px;background:#8e8e8e;"></div>
<div class="a" style="left:1043.6px;top:284.0px;width:3.2px;height:0.55px;background:#8e8e8e;"></div>
<span class="t j b" style="left:962px;top:293.3px;color:#f0f0f0">線幅:</span>
<div class="spin" style="left:978.5px;top:291.8px;transform:scale(.85)"></div>
<div class="a" style="left:983.7px;top:291.7px;width:27px;height:7.4px;background:#464646;border-radius:.8px"></div>
<div class="arr" style="left:1012.2px;top:294.6px;border-top-color:#c4c4c4;transform:scale(.85)"></div>
<span class="t j" style="left:962px;top:304.2px;color:#858585">線端:</span>
<span class="t j" style="left:952.2px;top:315.4px;color:#858585">角の形状:</span>
<span class="t j" style="left:952.2px;top:326.9px;color:#858585">線の位置:</span>
<svg class="a" style="left:977px;top:302px" width="30" height="32" viewBox="0 0 30 32"><g fill="none" stroke="#858585" stroke-width=".7"><path d="M2 2 H5.500 V6.500 H2 M3.800 2 V6.500"/><path d="M11 2 H14 A2.200 2.200 0 0 1 14 6.500 H11 M12.500 2 V6.500"/><path d="M20 2 H25 V6.500 H20 M22 2 V6.500"/><path d="M1.500 13.500 H6 V18 M3.500 15.500 H6"/><path d="M10.500 13.500 H13 A2.500 2.500 0 0 1 15.500 16 V18"/><path d="M20 13.500 H23 L25 15.500 V18"/><path d="M1.500 29.500 V26 A2 2 0 0 1 5.500 26 M1.500 29.500 h4"/><path d="M11 29.500 V26.500 A2 2 0 0 1 15 26.500 M13 29.500 h3"/><path d="M20.500 29.500 V26.500 A2 2 0 0 1 24.500 26.500 M22.500 29.500 h3.500"/></g></svg>
<span class="t j" style="left:1008.5px;top:315.4px;color:#858585">比率:</span>
<div class="a" style="left:1023.2px;top:313.5px;width:20.5px;height:6.8px;background:transparent;border:.5px solid #666;border-radius:.6px"></div>
<div class="a" style="left:940.6px;top:336px;width:109px;height:0.6px;background:#474747;"></div>
<div class="a" style="left:942.2px;top:340.2px;width:4.5px;height:4.5px;background:transparent;border:.9px solid #f0f0f0;border-radius:.5px"></div>
<span class="t j b" style="left:949.7px;top:340px;color:#f4f4f4">破線</span>
<svg class="a" style="left:1017px;top:339.500px" width="31" height="6" viewBox="0 0 31 6"><g fill="none" stroke="#6f6f6f" stroke-width=".7" stroke-dasharray="1.600 1"><rect x="1" y="1" width="11" height="4"/><rect x="17" y="1" width="11" height="4"/></g></svg>
<span class="t j" style="left:943.5px;top:360.2px;color:#868686;font-size:4.600px">線分</span>
<div class="a" style="left:942.5px;top:349.5px;width:15px;height:7px;background:transparent;border:.5px solid #5a5a5a"></div>
<span class="t j" style="left:960.8px;top:360.2px;color:#868686;font-size:4.600px">間隔</span>
<div class="a" style="left:959.8px;top:349.5px;width:15px;height:7px;background:transparent;border:.5px solid #5a5a5a"></div>
<span class="t j" style="left:978.1px;top:360.2px;color:#868686;font-size:4.600px">線分</span>
<div class="a" style="left:977.1px;top:349.5px;width:15px;height:7px;background:transparent;border:.5px solid #5a5a5a"></div>
<span class="t j" style="left:995.4px;top:360.2px;color:#868686;font-size:4.600px">間隔</span>
<div class="a" style="left:994.4px;top:349.5px;width:15px;height:7px;background:transparent;border:.5px solid #5a5a5a"></div>
<span class="t j" style="left:1012.7px;top:360.2px;color:#868686;font-size:4.600px">線分</span>
<div class="a" style="left:1011.7px;top:349.5px;width:15px;height:7px;background:transparent;border:.5px solid #5a5a5a"></div>
<span class="t j" style="left:1030.0px;top:360.2px;color:#868686;font-size:4.600px">間隔</span>
<div class="a" style="left:1029.0px;top:349.5px;width:15px;height:7px;background:transparent;border:.5px solid #5a5a5a"></div>
<span class="t j" style="left:961.4px;top:372.8px;color:#858585">矢印:</span>
<div class="a" style="left:976px;top:370.7px;width:20px;height:8.5px;background:#898989;"></div>
<div class="a" style="left:1008px;top:370.7px;width:20px;height:8.5px;background:#898989;"></div>
<svg class="a" style="left:1039px;top:372px" width="6" height="6" viewBox="0 0 6 6"><path d="M1 1.500 H5 M4 .5 l1 1 -1 1 M5 4.500 H1 M2 3.500 l-1 1 1 1" stroke="#858585" stroke-width=".6" fill="none"/></svg>
<span class="t j" style="left:961.4px;top:385.8px;color:#858585">倍率:</span>
<div class="a" style="left:976px;top:384px;width:20px;height:7.5px;background:transparent;border:.5px dashed #606060"></div>
<div class="a" style="left:1008px;top:384px;width:20px;height:7.5px;background:transparent;border:.5px dashed #606060"></div>
<div class="a" style="left:1039px;top:385px;width:5px;height:5px;background:transparent;border:.5px solid #686868"></div>
<span class="t j" style="left:952px;top:397.3px;color:#858585">先端位置:</span>
<svg class="a" style="left:977px;top:396.500px" width="20" height="6" viewBox="0 0 20 6"><path d="M1 3 H6 M4.500 1.500 L6 3 L4.500 4.500 M10.500 3 H15 M13.500 1.500 L15 3 L13.500 4.500 M16 1 V5" stroke="#8a8a8a" stroke-width=".7" fill="none"/></svg>
<span class="t j" style="left:944px;top:411.5px;color:#858585">プロファイル:</span>
<div class="a" style="left:976px;top:409.4px;width:42px;height:8.8px;background:#898989;"></div>
<svg class="a" style="left:1019px;top:410.500px" width="30" height="7" viewBox="0 0 30 7"><path d="M2.500 2.500 l1.300 1.500 1.300-1.500" stroke="#7a7a7a" stroke-width=".7" fill="none"/><path d="M11 1.500 L14.500 3.500 L11 5.500Z M15 1.500 V5.500" fill="#6c6c6c" stroke="#6c6c6c" stroke-width=".5"/><path d="M21 1.500 L24.500 3.500 L21 5.500Z M25.500 1 L22 6" fill="#6c6c6c" stroke="#6c6c6c" stroke-width=".5"/></svg>
<div class="a" style="left:940.6px;top:422.7px;width:109px;height:177.3px;background:#535353;"></div>
<div class="a" style="left:940.6px;top:422.7px;width:108.99999999999989px;height:10px;background:#454545;"></div>
<div class="a" style="left:941.4px;top:422.7px;width:22.6px;height:10px;background:#535353;"></div>
<span class="t j b" style="left:944px;top:425.5px;color:#f0f0f0;font-size:4.450px">レイヤー</span>
<span class="t j" style="left:968px;top:425.5px;color:#a2a2a2;font-size:4.400px"><span style="display:inline-block;width:35.500px;overflow:hidden;vertical-align:top">アセットの書き出し</span></span>
<span class="t j" style="left:1005.4px;top:425.5px;color:#a2a2a2;font-size:4.400px">アートボード</span>
<div class="a" style="left:1043.6px;top:426.2px;width:3.2px;height:0.55px;background:#8e8e8e;"></div>
<div class="a" style="left:1043.6px;top:427.5px;width:3.2px;height:0.55px;background:#8e8e8e;"></div>
<div class="a" style="left:1043.6px;top:428.8px;width:3.2px;height:0.55px;background:#8e8e8e;"></div>
<div class="a" style="left:944.8px;top:438.7px;width:90px;height:8.8px;background:#464646;border-radius:.8px"></div>
<svg class="a" style="left:946.500px;top:440.500px" width="6" height="6" viewBox="0 0 6 6"><circle cx="2.300" cy="2.300" r="1.600" fill="none" stroke="#d0d0d0" stroke-width=".7"/><path d="M3.500 3.500 L5.200 5.200" stroke="#d0d0d0" stroke-width=".8"/></svg>
<span class="t j" style="left:956.6px;top:440.6px;color:#d0d0d0;font-size:5.100px">すべてを検索</span>
<svg class="a" style="left:1039.500px;top:440px" width="6.500" height="6.500" viewBox="0 0 6.500 6.500"><path d="M.5 .8 H6 L3.900 3.400 V6 L2.600 5.200 V3.400Z" fill="#f0f0f0"/></svg>
<div class="a" style="left:941.6px;top:451.5px;width:107.2px;height:8.7px;background:#4a6384;"></div>
<svg class="a" style="left:943px;top:454px" width="5.600" height="3.600" viewBox="0 0 5.600 3.600"><path d="M.3 1.800 C1.500 .2 4.100 .2 5.300 1.800 C4.100 3.400 1.500 3.400 .3 1.800Z" fill="#d6d6d6"/><circle cx="2.800" cy="1.800" r=".8" fill="#4a6384"/></svg>
<div class="a" style="left:960.1px;top:452px;width:1.3px;height:7.7px;background:#3f7ff5;"></div>
<span class="t " style="left:964.6px;top:453.2px;font-size:5.500px;color:#e0e0e0">›</span>
<div class="a" style="left:972px;top:452.3px;width:7.2px;height:7.1px;background:#fff;"></div>
<div class="a" style="left:973.8px;top:455.5px;width:1.6px;height:1.8px;background:#7a9e2a;"></div>
<div class="a" style="left:975.8px;top:455.3px;width:1.6px;height:2px;background:#fbb01c;"></div>
<span class="t j" style="left:982.2px;top:453.7px;color:#f2f2f2;font-size:4.900px">レイヤー 1</span>
<svg class="a" style="left:1036px;top:451.500px" width="13" height="9" viewBox="0 0 13 9"><circle cx="6" cy="4.500" r="1.900" fill="none" stroke="#e6e6e6" stroke-width=".7"/><path d="M12.600 0 V3 L9.600 0Z" fill="#f0f0f0"/></svg>
<div class="a" style="left:940.6px;top:591.3px;width:109px;height:0.5px;background:#4c4c4c;"></div>
<span class="t j" style="left:942.2px;top:593.2px;color:#d6d6d6">1 レイ...</span>
<svg class="a" style="left:966px;top:591.500px" width="82" height="8" viewBox="0 0 82 8"><g fill="none" stroke="#d6d6d6" stroke-width=".7"><rect x="3" y="1.600" width="5" height="4.800"/><path d="M5.500 1.600 V6.400 M3 4 H8" /><rect x="5.500" y="4" width="2.500" height="2.400" fill="#d6d6d6"/><rect x="13" y="3" width="4" height="3.500"/><path d="M15.500 3.500 L18.500 1 M16.800 1 h1.700 v1.700"/><circle cx="26" cy="3.600" r="1.800"/><path d="M27.300 5 L29 6.700"/><circle cx="36.500" cy="4" r="2.400" fill="#cfcfcf"/><path d="M35.300 4 l1 1 1.500-2" stroke="#535353"/><path d="M45 2 h3 M45 4 h3 M45 6 h3 M49.500 2.500 h3.500 v3.500 h-3.500z" /><rect x="49.500" y="2.500" width="3.500" height="3.500" fill="#cfcfcf"/><rect x="57.500" y="1.800" width="4.600" height="4.600"/><path d="M59.800 3 V5.200 M58.700 4.100 H60.900"/><path d="M69.500 2.500 h4 v4.500 h-4z M68.700 2.500 h5.600" stroke="#6e6e6e"/></g></svg>
<div class="a" style="left:1051.7px;top:44.8px;width:15.3px;height:555.2px;background:#535353;"></div>
<div class="a" style="left:1051.7px;top:44.8px;width:15.3px;height:3.5px;background:#4a4a4a;"></div>
<span class="t " style="left:1056.5px;top:44.3px;font-size:4px;color:#7a7a7a;letter-spacing:-.4px">·····</span>
<svg class="a" style="left:1054.500px;top:49.500px" width="10" height="20" viewBox="0 0 10 20"><g fill="none" stroke="#d8d8d8" stroke-width=".8"><path d="M2.500 2 H8 M2.500 3.800 H8 M2.500 5.600 H8 M2.500 7.400 H8" stroke="#bdbdbd"/><rect x="2.800" y="12.800" width="5.200" height="5.600" stroke="#f0f0f0" stroke-width="1"/><path d="M5 14.500 h2.200 v2" stroke="#f0f0f0"/></g></svg>
<div class="a" style="left:1051.7px;top:71px;width:15.3px;height:0.6px;background:#474747;"></div></body>
</html>
